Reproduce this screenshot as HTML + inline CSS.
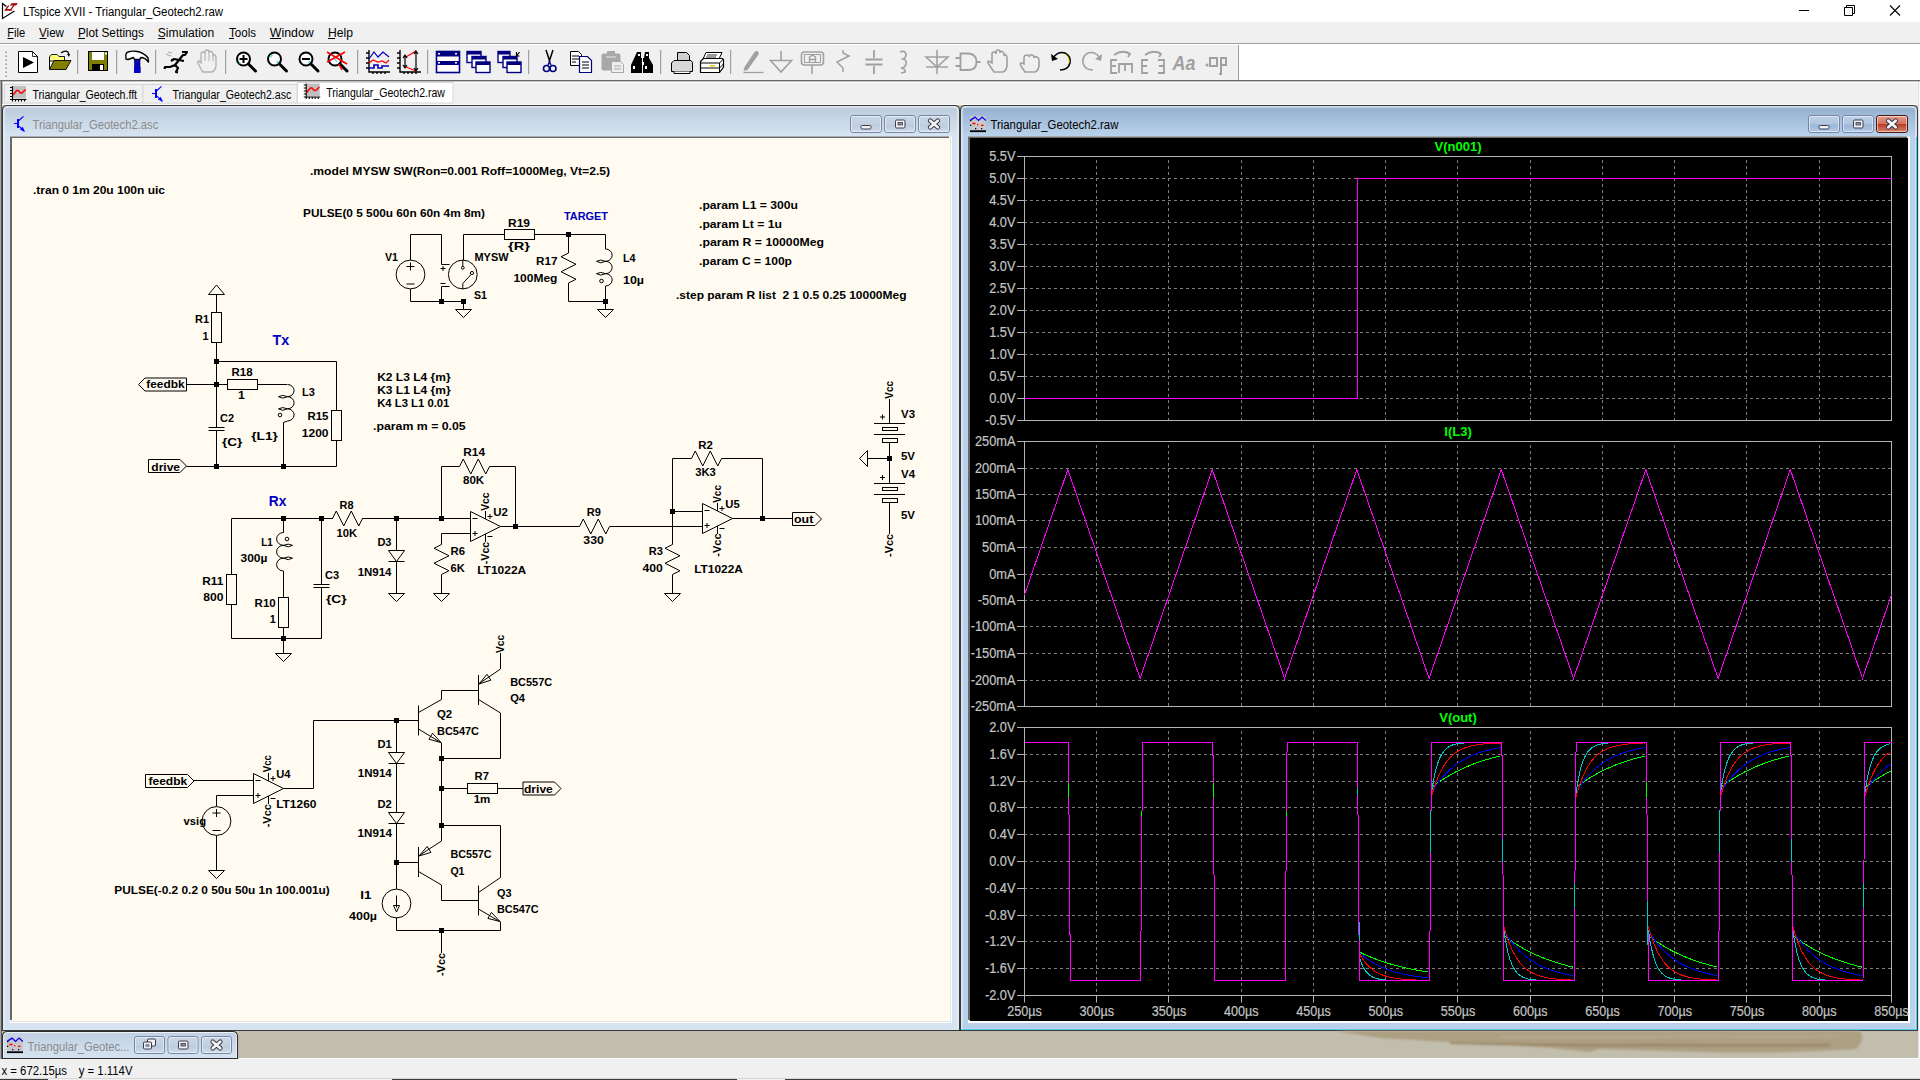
<!DOCTYPE html><html><head><meta charset="utf-8"><style>*{margin:0;padding:0}html,body{width:1920px;height:1080px;overflow:hidden;background:#c2beae}svg{display:block;font-family:"Liberation Sans",sans-serif}text{white-space:pre}</style></head><body><svg width="1920" height="1080" viewBox="0 0 1920 1080"><defs>
<linearGradient id="gTitleI" x1="0" y1="0" x2="0" y2="1"><stop offset="0" stop-color="#bccbdc"/><stop offset="1" stop-color="#d8e5f2"/></linearGradient>
<linearGradient id="gTitleA" x1="0" y1="0" x2="0" y2="1"><stop offset="0" stop-color="#95afd0"/><stop offset="1" stop-color="#bcd4ec"/></linearGradient>
<linearGradient id="gBtn" x1="0" y1="0" x2="0" y2="1"><stop offset="0" stop-color="#c9d6e5"/><stop offset="0.5" stop-color="#c3d1e2"/><stop offset="0.55" stop-color="#bccbdd"/><stop offset="1" stop-color="#cfdcea"/></linearGradient>
<linearGradient id="gBtnA" x1="0" y1="0" x2="0" y2="1"><stop offset="0" stop-color="#bed0e6"/><stop offset="0.5" stop-color="#b0c6e0"/><stop offset="0.55" stop-color="#9ab5d6"/><stop offset="1" stop-color="#b5cde8"/></linearGradient>
<linearGradient id="gRed" x1="0" y1="0" x2="0" y2="1"><stop offset="0" stop-color="#e8a090"/><stop offset="0.5" stop-color="#d0705a"/><stop offset="0.5" stop-color="#b83a20"/><stop offset="1" stop-color="#d88870"/></linearGradient>
<linearGradient id="gMin" x1="0" y1="0" x2="0" y2="1"><stop offset="0" stop-color="#c0d0e2"/><stop offset="1" stop-color="#d6e3f1"/></linearGradient>
<filter id="blur1" x="-5%" y="-50%" width="110%" height="200%"><feGaussianBlur stdDeviation="0.9"/></filter>
</defs><rect x="0" y="0" width="1920" height="22" fill="#fff"/><rect x="0" y="22" width="1920" height="21" fill="#f0f0f0"/><rect x="0" y="43" width="1920" height="1" fill="#a0a0a0"/><rect x="0" y="44" width="1920" height="37" fill="#f0f0f0"/><rect x="0" y="44" width="1920" height="1" fill="#fff"/><rect x="1239" y="45" width="681" height="36" fill="#fff"/><rect x="1238" y="45" width="1" height="36" fill="#a0a0a0"/><rect x="0" y="80" width="1920" height="1.5" fill="#6a6a6a"/><rect x="0" y="81.5" width="1920" height="23" fill="#f0f0f0"/><path d="M6.5,6.5 L2.5,3.5 L2.5,18.5 L14.5,11" fill="none" stroke="#000" stroke-width="1.2"/><path d="M4,10.8 L8,5.5 L9.5,5.5 L7,9 L10.5,9 L13,5.5 L9.8,5.5 L11.5,3.2 L17.8,3 L16.2,5.5 L14.5,5.5 L11.5,10 L12.5,10.8 Z" fill="#a01010"/><text x="23" y="16" font-size="12" fill="#000" textLength="200" lengthAdjust="spacingAndGlyphs">LTspice XVII - Triangular_Geotech2.raw</text><path d="M1799,10.5 H1809" stroke="#000" stroke-width="1"/><path d="M1844.5,7.5 h8 v8 h-8 z M1846.5,7.5 v-2 h8 v8 h-2" fill="none" stroke="#000" stroke-width="1"/><path d="M1890,5.5 L1900,15.5 M1900,5.5 L1890,15.5" stroke="#000" stroke-width="1.1"/><text x="7.25" y="37" font-size="12" fill="#000" textLength="18" lengthAdjust="spacingAndGlyphs">File</text><text x="39" y="37" font-size="12" fill="#000" textLength="25" lengthAdjust="spacingAndGlyphs">View</text><text x="78" y="37" font-size="12" fill="#000" textLength="66" lengthAdjust="spacingAndGlyphs">Plot Settings</text><text x="157.75" y="37" font-size="12" fill="#000" textLength="56.6" lengthAdjust="spacingAndGlyphs">Simulation</text><text x="229" y="37" font-size="12" fill="#000" textLength="27" lengthAdjust="spacingAndGlyphs">Tools</text><text x="269.8" y="37" font-size="12" fill="#000" textLength="44" lengthAdjust="spacingAndGlyphs">Window</text><text x="328" y="37" font-size="12" fill="#000" textLength="25" lengthAdjust="spacingAndGlyphs">Help</text><path d="M7.5,38.5 H13.5" stroke="#000" stroke-width="1"/><path d="M39.5,38.5 H46.5" stroke="#000" stroke-width="1"/><path d="M78,38.5 H85" stroke="#000" stroke-width="1"/><path d="M158,38.5 H165" stroke="#000" stroke-width="1"/><path d="M229,38.5 H234" stroke="#000" stroke-width="1"/><path d="M270,38.5 H281" stroke="#000" stroke-width="1"/><path d="M328,38.5 H335" stroke="#000" stroke-width="1"/><rect x="0" y="1058" width="1920" height="22" fill="#f0f0f0"/><rect x="0" y="1058" width="1920" height="1" fill="#fafafa"/><rect x="0" y="1078" width="1920" height="1" fill="#d8d8d8"/><rect x="0" y="1079" width="48" height="1" fill="#3c3c3c"/><rect x="392" y="1079" width="345" height="1" fill="#3c3c3c"/><rect x="785" y="1079" width="1135" height="1" fill="#3c3c3c"/><text x="1.5" y="1075" font-size="12" fill="#000" textLength="65.5" lengthAdjust="spacingAndGlyphs">x = 672.15µs</text><text x="78.75" y="1075" font-size="12" fill="#000" textLength="53.75" lengthAdjust="spacingAndGlyphs">y = 1.114V</text><rect x="1" y="81" width="1.5" height="24" fill="#7a7a7a"/><rect x="2.5" y="82" width="1918" height="1" fill="#fff"/><rect x="4.5" y="84.5" width="138.5" height="18.5" fill="#f0f0f0" stroke="#d8d8d8"/><rect x="143" y="84.5" width="154" height="18.5" fill="#f0f0f0" stroke="#d8d8d8"/><rect x="297.5" y="82.5" width="155.5" height="20.5" fill="#fff" stroke="#d8d8d8"/><text x="32.5" y="99.25" font-size="12" fill="#000" textLength="104.5" lengthAdjust="spacingAndGlyphs">Triangular_Geotech.fft</text><text x="172.5" y="99.25" font-size="12" fill="#000" textLength="118.75" lengthAdjust="spacingAndGlyphs">Triangular_Geotech2.asc</text><text x="326.25" y="96.75" font-size="12" fill="#000" textLength="118.75" lengthAdjust="spacingAndGlyphs">Triangular_Geotech2.raw</text><g transform="translate(0,0)"><rect x="13" y="86" width="13" height="12.5" fill="#c0c0c0"/><path d="M13,95 L16.6,90.5 L18.2,90.5 L20.5,93 L22,93 L25.6,89.5" fill="none" stroke="#ff0000" stroke-width="1.6"/><path d="M12.5,86 V100 M10,87.5 H12.5 M10,90.5 H12.5 M10,93.5 H12.5 M10,96.5 H12.5 M10,99.5 H26.5 M12.5,100 V101.5 M15.5,100 V101.5 M18.5,100 V101.5 M21.5,100 V101.5 M24.5,100 V101.5" fill="none" stroke="#000" stroke-width="1.1"/></g><g transform="translate(293.75,-2.5)"><rect x="13" y="86" width="13" height="12.5" fill="#c0c0c0"/><path d="M13,95 L16.6,90.5 L18.2,90.5 L20.5,93 L22,93 L25.6,89.5" fill="none" stroke="#ff0000" stroke-width="1.6"/><path d="M12.5,86 V100 M10,87.5 H12.5 M10,90.5 H12.5 M10,93.5 H12.5 M10,96.5 H12.5 M10,99.5 H26.5 M12.5,100 V101.5 M15.5,100 V101.5 M18.5,100 V101.5 M21.5,100 V101.5 M24.5,100 V101.5" fill="none" stroke="#000" stroke-width="1.1"/></g><g transform="translate(0,0)" fill="none" stroke="#0000ff"><rect x="155" y="89" width="2" height="9" fill="#0000ff" stroke="none"/><path d="M152,93.5 H155 M157,90.5 L161.5,86.3 M157,96.2 L162.5,101.5" stroke-width="1.1"/><path d="M158.3,99.3 L160.6,97.3 L162,100.8 Z" fill="#0000ff" stroke-width="0.8"/></g><rect x="0" y="104" width="1920" height="954" fill="#c2beae"/><rect x="0" y="104" width="1920" height="1" fill="#fafafa"/><rect x="5" y="51" width="2" height="2" fill="#c8c8c8"/><rect x="6" y="52" width="1" height="1" fill="#909090"/><rect x="5" y="55" width="2" height="2" fill="#c8c8c8"/><rect x="6" y="56" width="1" height="1" fill="#909090"/><rect x="5" y="59" width="2" height="2" fill="#c8c8c8"/><rect x="6" y="60" width="1" height="1" fill="#909090"/><rect x="5" y="63" width="2" height="2" fill="#c8c8c8"/><rect x="6" y="64" width="1" height="1" fill="#909090"/><rect x="5" y="67" width="2" height="2" fill="#c8c8c8"/><rect x="6" y="68" width="1" height="1" fill="#909090"/><rect x="5" y="71" width="2" height="2" fill="#c8c8c8"/><rect x="6" y="72" width="1" height="1" fill="#909090"/><rect x="5" y="75" width="2" height="2" fill="#c8c8c8"/><rect x="6" y="76" width="1" height="1" fill="#909090"/><rect x="77.0" y="50" width="1.2" height="24" fill="#a0a0a0"/><rect x="116.0" y="50" width="1.2" height="24" fill="#a0a0a0"/><rect x="155.0" y="50" width="1.2" height="24" fill="#a0a0a0"/><rect x="225.0" y="50" width="1.2" height="24" fill="#a0a0a0"/><rect x="357.0" y="50" width="1.2" height="24" fill="#a0a0a0"/><rect x="427.0" y="50" width="1.2" height="24" fill="#a0a0a0"/><rect x="528.0" y="50" width="1.2" height="24" fill="#a0a0a0"/><rect x="660.0" y="50" width="1.2" height="24" fill="#a0a0a0"/><rect x="730.0" y="50" width="1.2" height="24" fill="#a0a0a0"/><g transform="translate(18,50)"><path d="M0.5,1.5 H14.5 L19.5,6.5 V22.5 H0.5 Z" fill="#fff" stroke="#000"/><path d="M14.5,1.5 V6.5 H19.5" fill="none" stroke="#000" stroke-width="0.8"/><path d="M5,7 L16,12.5 L5,18 Z" fill="#000"/></g><g transform="translate(49,50)"><path d="M0.5,7 L2.5,4.5 H8 L10,6.5 H15.5 V11 H0.5 Z" fill="#ffff80" stroke="#000" stroke-width="0.9"/><path d="M0.5,19.5 L5,10.5 H22 L17,19.5 Z" fill="#808000" stroke="#000" stroke-width="0.9"/><path d="M0.5,7 V19.5" stroke="#000"/><path d="M12,3 Q16,0 19,2 L20,5" fill="none" stroke="#000" stroke-width="1.2"/><path d="M18,4 L21,4 L20,7" fill="#000"/></g><g transform="translate(88,50)"><rect x="0.5" y="1.5" width="19" height="19" fill="#808000" stroke="#000"/><rect x="4" y="2" width="12" height="8" fill="#fff"/><rect x="4" y="14" width="12" height="7" fill="#000"/><rect x="12" y="15" width="3" height="5" fill="#fff"/><rect x="17" y="2.5" width="2" height="2" fill="#fff"/></g><g transform="translate(125,50)"><path d="M0.8,5 Q1,2.5 3,2 Q6,1 10,1.2 Q18,1.5 23,8 L23.5,12 Q20,7.5 16,7.5 L14.5,9.5 L9.5,9.5 L8.5,7.5 Q6,8.5 3,9.5 L1,9 Z" fill="#fff" stroke="#000" stroke-width="1.4" stroke-linejoin="round"/><rect x="9.5" y="9.5" width="5.5" height="13" fill="#0000c8" stroke="#000" stroke-width="0.6"/><rect x="9" y="17" width="6.5" height="6" fill="#0000c8"/></g><g transform="translate(164,50)"><path d="M18,2 L23,2 L21,5 L19,5 L15,10 L20,11 M15,10 L11,15 L6,17 L1,17 L0.5,19 M11,15 L14,18 L12,22 L14,22.5 M15,10 L10,9 L7,11" fill="none" stroke="#000" stroke-width="2.2" stroke-linejoin="round"/><path d="M2,4 L7,6 M4,2 L8,3" stroke="#909090" stroke-width="0.8"/></g><g transform="translate(197,50)"><path d="M5,21 L1,13 Q0,11 2,11 L4,13 V4 Q4,2 6,2 Q8,2 8,4 V2 Q8,0 10,0 Q12,0 12,2 V3 Q12,1 14,1.5 Q16,2 16,4 V6 Q17,4 18,5 Q19,6 19,8 V16 Q18,21 15,22 H6 Z" fill="none" stroke="#b0b0b0" stroke-width="1.3"/><path d="M8,4 V11 M12,3 V11 M16,5 V11" stroke="#b0b0b0" stroke-width="1"/></g><g transform="translate(235.5,50)"><circle cx="8" cy="9" r="6.5" fill="#fff" stroke="#000" stroke-width="2"/><path d="M8,5 V13 M4,9 H12" stroke="#000" stroke-width="2"/><path d="M3.5,12 L5,13.5" stroke="#40e0f0" stroke-width="1.3"/><path d="M13,14 L20,21" stroke="#000" stroke-width="3" stroke-linecap="round"/></g><g transform="translate(266.5,50)"><circle cx="8" cy="9" r="6.5" fill="#fff" stroke="#000" stroke-width="2"/><path d="M4,7 L6,4.5 M10,13 L12,11" stroke="#40e0f0" stroke-width="1.3"/><path d="M13,14 L20,21" stroke="#000" stroke-width="3" stroke-linecap="round"/></g><g transform="translate(298,50)"><circle cx="8" cy="9" r="6.5" fill="#fff" stroke="#000" stroke-width="2"/><path d="M4,9 H12" stroke="#000" stroke-width="2"/><path d="M10,13 L12,11" stroke="#40e0f0" stroke-width="1.3"/><path d="M13,14 L20,21" stroke="#000" stroke-width="3" stroke-linecap="round"/></g><g transform="translate(327,50)"><circle cx="8" cy="9" r="6.5" fill="#fff" stroke="#000" stroke-width="2"/><path d="M6,6 L10,12" stroke="#40e0f0" stroke-width="1.3"/><path d="M13,14 L20,21" stroke="#000" stroke-width="3" stroke-linecap="round"/><path d="M0,2 L20,14 M18,2 L0,12 M12,14 L15,20" stroke="#ff0000" stroke-width="1.6"/></g><g transform="translate(366,50)"><path d="M3,0 V22 H24 M0,3 H3 M0,8 H3 M0,13 H3 M0,18 H3 M7,22 V24 M11,22 V24 M15,22 V24 M19,22 V24" fill="none" stroke="#000" stroke-width="1.4"/><path d="M3,9 L8,2 L12,7 L17,2 L23,7" fill="none" stroke="#0000c0" stroke-width="1.2"/><path d="M3,13 L7,10 L12,12 L16,11 L20,13 L23,10" fill="none" stroke="#f00" stroke-width="1.2"/><path d="M3,18 H8 V15 H12 V18 H16 V16 H23" fill="none" stroke="#0000c0" stroke-width="1.6"/></g><g transform="translate(397,50)"><path d="M3,0 V22 H24 M0,3 H3 M0,8 H3 M0,13 H3 M0,18 H3 M7,22 V24 M11,22 V24 M15,22 V24 M19,22 V24" fill="none" stroke="#000" stroke-width="1.4"/><path d="M9,7 L19,1 M9,17 L19,21" fill="none" stroke="#f00" stroke-width="1.2"/><path d="M8,5 V18 M19,1 V21 M6,8 L8,5 L10,8 M6,15 L8,18 L10,15 M17,4 L19,1 L21,4 M17,18 L19,21 L21,18" fill="none" stroke="#000" stroke-width="1.2"/></g><g transform="translate(436,50)"><rect x="0.5" y="1.5" width="23" height="21" fill="#fff" stroke="#000080" stroke-width="1.6"/><rect x="0.5" y="1.5" width="23" height="5" fill="#000080"/><rect x="0.5" y="11" width="23" height="4" fill="#000080"/><rect x="2" y="3" width="2" height="1.5" fill="#fff"/><rect x="19" y="3" width="2" height="1.5" fill="#fff"/><rect x="2" y="12" width="2" height="1.5" fill="#fff"/><rect x="19" y="12" width="2" height="1.5" fill="#fff"/></g><g transform="translate(466.5,50)"><rect x="0.5" y="1.5" width="14" height="11" fill="#fff" stroke="#000080" stroke-width="1.4"/><rect x="0.5" y="1.5" width="14" height="3" fill="#000080"/><rect x="5.5" y="6.5" width="14" height="11" fill="#fff" stroke="#000080" stroke-width="1.4"/><rect x="5.5" y="6.5" width="14" height="3" fill="#000080"/><rect x="9.5" y="12" width="14" height="10.5" fill="#fff" stroke="#000080" stroke-width="1.4"/><rect x="9.5" y="12" width="14" height="3" fill="#000080"/></g><g transform="translate(497.5,50)"><rect x="0.5" y="1.5" width="12" height="11" fill="#fff" stroke="#000080" stroke-width="1.4"/><rect x="0.5" y="1.5" width="12" height="3" fill="#000080"/><rect x="5.5" y="6.5" width="14" height="11" fill="#fff" stroke="#000080" stroke-width="1.4"/><rect x="5.5" y="6.5" width="14" height="3" fill="#000080"/><rect x="9.5" y="12" width="14" height="10.5" fill="#fff" stroke="#000080" stroke-width="1.4"/><rect x="9.5" y="12" width="14" height="3" fill="#000080"/><path d="M19,6 L22,2 M19,2 V6 H22" fill="none" stroke="#000" stroke-width="1.2"/></g><g transform="translate(543,50)"><path d="M3,0 L7,12 M10,0 L6,12" stroke="#000" stroke-width="1.5"/><circle cx="3.5" cy="18.5" r="3" fill="none" stroke="#000080" stroke-width="1.6"/><circle cx="10" cy="18.5" r="3" fill="none" stroke="#000080" stroke-width="1.6"/><path d="M5,15 L6.5,12 L8,15" fill="none" stroke="#000080" stroke-width="1.4"/></g><g transform="translate(570,50)"><path d="M0.5,1.5 H8.5 L11.5,4.5 V15.5 H0.5 Z" fill="#fff" stroke="#000"/><path d="M2,6 H9 M2,9 H9 M2,12 H6" stroke="#000"/><path d="M9.5,6.5 H17.5 L21.5,10.5 V22.5 H9.5 Z" fill="#fff" stroke="#000080" stroke-width="1.2"/><path d="M12,12 H19 M12,15 H19 M12,18 H19" stroke="#000"/></g><g transform="translate(601,50)"><rect x="0.5" y="3.5" width="19" height="17" rx="2" fill="#a8a8a8"/><rect x="6" y="1" width="8" height="4" fill="#a8a8a8"/><path d="M5,7 H15" stroke="#e8e8e8"/><path d="M10.5,11.5 H19.5 L22.5,14.5 V22.5 H10.5 Z" fill="#eee" stroke="#a8a8a8"/><path d="M13,16 H20 M13,19 H20" stroke="#a8a8a8"/></g><g transform="translate(631,50)"><path d="M6,2 H10 V8 L11,8 V23 H0 V15 Z M14,2 H18 V8 L22,15 V23 H12 V8 L13,8 Z" fill="#000"/><rect x="7" y="4" width="2" height="2" fill="#fff"/><rect x="15" y="4" width="2" height="2" fill="#fff"/><rect x="2" y="16" width="2" height="3" fill="#fff"/><rect x="14" y="16" width="2" height="3" fill="#fff"/><rect x="11" y="12" width="2" height="3" fill="#fff"/></g><g transform="translate(671,50)"><path d="M6.5,2.5 H15.5 L18.5,5.5 V11 H6.5 Z" fill="#d0d0d0" stroke="#000"/><path d="M0.5,13 L3,10.5 H20 L21.5,12.5 V21.5 H0.5 Z" fill="#d8d8d8" stroke="#000"/><path d="M3,21.5 V23.5 H19 V21.5" fill="#fff" stroke="#000"/></g><g transform="translate(700,50)"><path d="M6,2.5 H22 L19,9 H3 Z" fill="#fff" stroke="#000"/><path d="M7,5 H17 M6,7 H16" stroke="#000" stroke-width="0.8"/><path d="M0.5,11.5 L3.5,8.5 H22.5 L23.5,10 V17 L19.5,22.5 H0.5 Z" fill="#fff" stroke="#000" stroke-width="1.2"/><path d="M0.5,13 H19.5 V22.5 M19.5,13 L23.5,9 M0.5,18 H19.5 L23.5,14" fill="none" stroke="#000"/><rect x="10" y="15" width="5" height="1.5" fill="#e0d000"/></g><g transform="translate(741.5,50)"><path d="M3,17 L13,2 Q15,0 17,2 Q18,4 16,6 L6,20 L2,21 Z" fill="#a0a0a0"/><path d="M2,22.5 H22" stroke="#a0a0a0" stroke-width="1.3"/></g><g transform="translate(769.5,50)"><path d="M11.5,1 V10 M1,10.5 H22 L11.5,22 Z" fill="none" stroke="#a0a0a0" stroke-width="1.6"/></g><g transform="translate(800.5,50)"><rect x="1" y="2" width="22" height="13" rx="3" fill="none" stroke="#a0a0a0" stroke-width="1.6"/><rect x="4" y="4.5" width="16" height="8" fill="none" stroke="#a0a0a0" stroke-width="1"/><path d="M9,12 V7 L12,5 L15,7 V12 M9,9.5 H15" fill="none" stroke="#a0a0a0" stroke-width="1.4"/><path d="M11.5,15 V24" stroke="#a0a0a0" stroke-width="1.6"/></g><g transform="translate(835,50)"><path d="M8,0 V3 L14,6 L2,12 L8,18 V22" fill="none" stroke="#a0a0a0" stroke-width="1.5"/></g><g transform="translate(865.5,50)"><path d="M8.5,0 V8 M0,9.5 H17 M0,14.5 H17 M8.5,16 V24" fill="none" stroke="#a0a0a0" stroke-width="1.8"/></g><g transform="translate(900,50)"><path d="M0,2 Q5,0 6,4 Q6,8 3,9 Q7,10 6,14 Q5,18 1,18 Q6,19 5,22 L1,23" fill="none" stroke="#a0a0a0" stroke-width="1.6"/></g><g transform="translate(926,50)"><path d="M11,0 V24 M0,7 H22 L11,17 Z M0,17 H22" fill="none" stroke="#a0a0a0" stroke-width="1.6"/></g><g transform="translate(955.5,50)"><path d="M5,3.5 H13 Q21,4 21,12 Q21,20 13,20 H5 Z M0,8 H5 M0,16 H5 M21,12 H25" fill="none" stroke="#a0a0a0" stroke-width="1.8"/></g><g transform="translate(987,50)"><path d="M7,22 L1,13 Q0,11 2,11 L5,13 V4 Q5,2 7,2 Q9,2 9,4 V2 Q9,0 11,0 Q13,0 13,2 V3 Q13,1 15,1.5 Q17,2 17,4 V6 Q18,4 19,5 Q20,6 20,8 V16 Q19,21 16,22 Z" fill="none" stroke="#a0a0a0" stroke-width="1.6"/></g><g transform="translate(1019,50)"><path d="M6,22 L2,16 Q0,13 3,13 L5,14 V8 Q5,5 8,5 Q10,5 10,7 Q11,4 13,5 Q15,5 15,8 Q16,6 18,7 Q20,8 20,10 V16 Q19,21 16,22 Z" fill="none" stroke="#a0a0a0" stroke-width="1.6"/></g><g transform="translate(1050,50)"><path d="M3,8 Q8,1 15,3 Q21,6 20,13 Q18,20 10,20" fill="none" stroke="#000" stroke-width="1.6"/><path d="M15,4 Q20,7 19,13" fill="none" stroke="#e0d000" stroke-width="1"/><path d="M1,4 L2,11 L8,9 Z" fill="#000"/></g><g transform="translate(1081,50)"><path d="M19,8 Q14,1 7,3 Q1,6 2,13 Q4,20 12,20" fill="none" stroke="#a0a0a0" stroke-width="1.6"/><path d="M21,4 L20,11 L14,9 Z" fill="#a0a0a0"/></g><g transform="translate(1110,50)"><path d="M7,10 H1 V23 H7 M1,16 H6 M9,23 V14 H22 V23 M15,14 V21 M4,5 Q12,-1 20,4 M17,2 L20,4 L18,7" fill="none" stroke="#a0a0a0" stroke-width="1.8"/></g><g transform="translate(1141,50)"><path d="M7,10 H1 V23 H7 M1,16 H6 M17,10 H23 V23 H17 M23,16 H18 M4,5 Q12,-1 20,4 M17,2 L20,4 L18,7" fill="none" stroke="#a0a0a0" stroke-width="1.8"/></g><g transform="translate(1172.5,50)"><text x="0" y="20" font-size="20" font-style="italic" font-weight="bold" fill="#a0a0a0" textLength="23" lengthAdjust="spacingAndGlyphs">Aa</text></g><g transform="translate(1205,50)"><circle cx="2" cy="15" r="1.5" fill="#a0a0a0"/><rect x="5" y="8" width="7" height="8" fill="none" stroke="#a0a0a0" stroke-width="2"/><path d="M14,24 H16 V8 H21 V15 H16" fill="none" stroke="#a0a0a0" stroke-width="2"/></g><path d="M2.5,1030.5 V110.5 Q2.5,105.5 7.5,105.5 H954.5 Q959.5,105.5 959.5,110.5 V1030.5 Z" fill="#d6e3f1" stroke="#3a3a3a" stroke-width="1.1"/><path d="M3.5,138 V111 Q3.5,106.5 8.5,106.5 H953.5 Q958.5,106.5 958.5,111 V138 Z" fill="url(#gTitleI)"/><path d="M4,1030 V111.5 Q4,107 9,107 H953 Q958,107 958,111.5 V1030" fill="none" stroke="rgba(255,255,255,0.75)" stroke-width="1"/><rect x="10" y="136.5" width="942" height="886.5" fill="#fff"/><rect x="11" y="137.5" width="940" height="884.5" fill="#e4e4e4"/><rect x="10" y="136.5" width="939" height="883.5" fill="#696969"/><rect x="12" y="138" width="938" height="883" fill="#fffbf0"/><rect x="850.5" y="115.5" width="31" height="17" rx="2.5" fill="url(#gBtn)" stroke="#7688a8"/><rect x="851.5" y="116.5" width="29" height="15" rx="1.5" fill="none" stroke="rgba(255,255,255,0.5)"/><rect x="861.0" y="125.5" width="10" height="3.5" rx="1.2" fill="#f2f2f2" stroke="#3a3a48"/><rect x="884.5" y="115.5" width="31" height="17" rx="2.5" fill="url(#gBtn)" stroke="#7688a8"/><rect x="885.5" y="116.5" width="29" height="15" rx="1.5" fill="none" stroke="rgba(255,255,255,0.5)"/><rect x="895.5" y="120" width="9.5" height="8" rx="1.2" fill="#f2f2f2" stroke="#3a3a48"/><rect x="898.0" y="122.5" width="4.5" height="2.5" fill="#8898b0" stroke="#3a3a48" stroke-width="0.8"/><rect x="918.5" y="115.5" width="31" height="17" rx="2.5" fill="url(#gBtn)" stroke="#7688a8"/><rect x="919.5" y="116.5" width="29" height="15" rx="1.5" fill="none" stroke="rgba(255,255,255,0.5)"/><path d="M930.2,120.7 L937.8,127.3 M937.8,120.7 L930.2,127.3" stroke="#383848" stroke-width="4.6" stroke-linecap="round"/><path d="M930.2,120.7 L937.8,127.3 M937.8,120.7 L930.2,127.3" stroke="#f4f4f4" stroke-width="2.6" stroke-linecap="round"/><text x="32.5" y="129" font-size="12" fill="#8a8a8a" textLength="125.8" lengthAdjust="spacingAndGlyphs">Triangular_Geotech2.asc</text><g transform="translate(-138,30)" fill="none" stroke="#0000ff"><rect x="155" y="89" width="2" height="9" fill="#0000ff" stroke="none"/><path d="M152,93.5 H155 M157,90.5 L161.5,86.3 M157,96.2 L162.5,101.5" stroke-width="1.1"/><path d="M158.3,99.3 L160.6,97.3 L162,100.8 Z" fill="#0000ff" stroke-width="0.8"/></g><path d="M960.5,1030.5 V110.5 Q960.5,105.5 965.5,105.5 H1912.5 Q1917.5,105.5 1917.5,110.5 V1030.5 Z" fill="#d6e3f1" stroke="#3a3a3a" stroke-width="1.1"/><path d="M961.5,138 V111 Q961.5,106.5 966.5,106.5 H1911.5 Q1916.5,106.5 1916.5,111 V138 Z" fill="url(#gTitleA)"/><rect x="961.5" y="138" width="8.5" height="892" fill="#b9d1ea"/><rect x="1908" y="138" width="8.5" height="892" fill="#b9d1ea"/><rect x="961.5" y="1021" width="955" height="9" fill="#b9d1ea"/><path d="M962,1030 V111.5 Q962,107 967,107 H1911 Q1916,107 1916,111.5 V1030" fill="none" stroke="rgba(255,255,255,0.75)" stroke-width="1"/><rect x="968" y="136.5" width="942" height="886.5" fill="#fff"/><rect x="969" y="137.5" width="940" height="884.5" fill="#e4e4e4"/><rect x="968" y="136.5" width="939" height="883.5" fill="#696969"/><rect x="970" y="138" width="938" height="883" fill="#000"/><rect x="1916" y="137" width="1" height="893" fill="#3ad0f0"/><rect x="968" y="1021" width="941" height="1.5" fill="#fff"/><rect x="1908" y="137" width="1.5" height="885" fill="#fff"/><rect x="961" y="1029" width="956" height="1" fill="#3ad0f0" opacity="0.8"/><rect x="1808.5" y="115.5" width="31" height="17" rx="2.5" fill="url(#gBtnA)" stroke="#7688a8"/><rect x="1809.5" y="116.5" width="29" height="15" rx="1.5" fill="none" stroke="rgba(255,255,255,0.5)"/><rect x="1819.0" y="125.5" width="10" height="3.5" rx="1.2" fill="#f2f2f2" stroke="#3a3a48"/><rect x="1842.5" y="115.5" width="31" height="17" rx="2.5" fill="url(#gBtnA)" stroke="#7688a8"/><rect x="1843.5" y="116.5" width="29" height="15" rx="1.5" fill="none" stroke="rgba(255,255,255,0.5)"/><rect x="1853.5" y="120" width="9.5" height="8" rx="1.2" fill="#f2f2f2" stroke="#3a3a48"/><rect x="1856.0" y="122.5" width="4.5" height="2.5" fill="#8898b0" stroke="#3a3a48" stroke-width="0.8"/><rect x="1876.5" y="115.5" width="31" height="17" rx="2.5" fill="url(#gRed)" stroke="#4a1818"/><rect x="1877.5" y="116.5" width="29" height="15" rx="1.5" fill="none" stroke="rgba(255,255,255,0.5)"/><path d="M1888.2,120.7 L1895.8,127.3 M1895.8,120.7 L1888.2,127.3" stroke="#383848" stroke-width="4.6" stroke-linecap="round"/><path d="M1888.2,120.7 L1895.8,127.3 M1895.8,120.7 L1888.2,127.3" stroke="#f4f4f4" stroke-width="2.6" stroke-linecap="round"/><text x="990.4" y="128.75" font-size="12" fill="#000" textLength="128" lengthAdjust="spacingAndGlyphs">Triangular_Geotech2.raw</text><g transform="translate(0,0)"><rect x="970" y="116" width="16" height="14.5" fill="#c8c8c8"/><path d="M970.2,120.4 L975,117.1 L978.5,120.4 L982.1,117.1 L985.8,120.4" fill="none" stroke="#0000ff" stroke-width="1.3"/><rect x="970" y="120" width="1.3" height="1.3" fill="#000"/><rect x="970" y="124.7" width="1.3" height="1.3" fill="#000"/><path d="M972.3,123.5 H975.5 M981,125.3 H983.6" stroke="#ff0000" stroke-width="1.3"/><rect x="977" y="124" width="1.3" height="1.3" fill="#ff0000"/><rect x="975" y="128" width="1.3" height="1.3" fill="#000080"/><rect x="981" y="128" width="1.3" height="1.3" fill="#000080"/><rect x="970" y="130.3" width="16" height="1.8" fill="#000"/></g><path d="M2.5,1058.5 V1036.5 Q2.5,1031.5 7.5,1031.5 H232.5 Q237.5,1031.5 237.5,1036.5 V1058.5 Z" fill="url(#gMin)" stroke="#2e2e2e" stroke-width="1.2"/><path d="M3.5,1058 V1036.5 Q3.5,1032.5 7.5,1032.5 H232 Q236.5,1032.5 236.5,1036.5 V1058" fill="none" stroke="rgba(255,255,255,0.7)"/><rect x="134.5" y="1036.5" width="30" height="17" rx="2.5" fill="url(#gBtn)" stroke="#7688a8"/><rect x="135.5" y="1037.5" width="28" height="15" rx="1.5" fill="none" stroke="rgba(255,255,255,0.5)"/><rect x="147.5" y="1039" width="8" height="7" rx="1" fill="#f2f2f2" stroke="#3a3a48"/><rect x="143.5" y="1042" width="8" height="7" rx="1" fill="#f2f2f2" stroke="#3a3a48"/><rect x="145.5" y="1044" width="4" height="3" fill="#8090a8"/><rect x="168.0" y="1036.5" width="30" height="17" rx="2.5" fill="url(#gBtn)" stroke="#7688a8"/><rect x="169.0" y="1037.5" width="28" height="15" rx="1.5" fill="none" stroke="rgba(255,255,255,0.5)"/><rect x="178.5" y="1041" width="9.5" height="8" rx="1.2" fill="#f2f2f2" stroke="#3a3a48"/><rect x="181.0" y="1043.5" width="4.5" height="2.5" fill="#8898b0" stroke="#3a3a48" stroke-width="0.8"/><rect x="201.5" y="1036.5" width="30" height="17" rx="2.5" fill="url(#gBtn)" stroke="#7688a8"/><rect x="202.5" y="1037.5" width="28" height="15" rx="1.5" fill="none" stroke="rgba(255,255,255,0.5)"/><path d="M212.7,1041.7 L220.3,1048.3 M220.3,1041.7 L212.7,1048.3" stroke="#383848" stroke-width="4.6" stroke-linecap="round"/><path d="M212.7,1041.7 L220.3,1048.3 M220.3,1041.7 L212.7,1048.3" stroke="#f4f4f4" stroke-width="2.6" stroke-linecap="round"/><text x="27.5" y="1051" font-size="12" fill="#8a8a8a" textLength="102" lengthAdjust="spacingAndGlyphs">Triangular_Geotec...</text><g transform="translate(-963,921)"><rect x="970" y="116" width="16" height="14.5" fill="#c8c8c8"/><path d="M970.2,120.4 L975,117.1 L978.5,120.4 L982.1,117.1 L985.8,120.4" fill="none" stroke="#0000ff" stroke-width="1.3"/><rect x="970" y="120" width="1.3" height="1.3" fill="#000"/><rect x="970" y="124.7" width="1.3" height="1.3" fill="#000"/><path d="M972.3,123.5 H975.5 M981,125.3 H983.6" stroke="#ff0000" stroke-width="1.3"/><rect x="977" y="124" width="1.3" height="1.3" fill="#ff0000"/><rect x="975" y="128" width="1.3" height="1.3" fill="#000080"/><rect x="981" y="128" width="1.3" height="1.3" fill="#000080"/><rect x="970" y="130.3" width="16" height="1.8" fill="#000"/></g><g filter="url(#blur1)"><path d="M1335,1031 L1860,1031 Q1866,1040 1856,1049 L1840,1050 L1780,1052.5 L1720,1052.5 L1650,1050.5 L1600,1049 L1590,1052 L1550,1048 L1500,1044 L1440,1041.5 L1380,1038 Z" fill="#ad9f82"/><path d="M1450,1043 Q1560,1046 1650,1045 Q1760,1046 1830,1045" fill="none" stroke="#8d7855" stroke-width="2" opacity="0.75"/><path d="M1500,1037 Q1600,1038 1700,1036 Q1780,1037 1840,1036" fill="none" stroke="#b9ad92" stroke-width="3" opacity="0.6"/></g><rect x="0" y="81" width="1" height="978" fill="#a8a8a8"/><rect x="1" y="81" width="1" height="978" fill="#5a5a5a"/><rect x="1918" y="82" width="2" height="976" fill="#fcfcfc"/><rect x="1918" y="82" width="1" height="976" fill="#e0e0e0"/><path d="M1096.5,160.0 V420.5" stroke="#808080" stroke-width="1" stroke-dasharray="3,3"/><path d="M1168.5,160.0 V420.5" stroke="#808080" stroke-width="1" stroke-dasharray="3,3"/><path d="M1241.5,160.0 V420.5" stroke="#808080" stroke-width="1" stroke-dasharray="3,3"/><path d="M1313.5,160.0 V420.5" stroke="#808080" stroke-width="1" stroke-dasharray="3,3"/><path d="M1385.5,160.0 V420.5" stroke="#808080" stroke-width="1" stroke-dasharray="3,3"/><path d="M1457.5,160.0 V420.5" stroke="#808080" stroke-width="1" stroke-dasharray="3,3"/><path d="M1530.5,160.0 V420.5" stroke="#808080" stroke-width="1" stroke-dasharray="3,3"/><path d="M1602.5,160.0 V420.5" stroke="#808080" stroke-width="1" stroke-dasharray="3,3"/><path d="M1674.5,160.0 V420.5" stroke="#808080" stroke-width="1" stroke-dasharray="3,3"/><path d="M1746.5,160.0 V420.5" stroke="#808080" stroke-width="1" stroke-dasharray="3,3"/><path d="M1819.5,160.0 V420.5" stroke="#808080" stroke-width="1" stroke-dasharray="3,3"/><path d="M1024,178.5 H1891.5" stroke="#808080" stroke-width="1" stroke-dasharray="3,3"/><path d="M1024,200.5 H1891.5" stroke="#808080" stroke-width="1" stroke-dasharray="3,3"/><path d="M1024,222.5 H1891.5" stroke="#808080" stroke-width="1" stroke-dasharray="3,3"/><path d="M1024,244.5 H1891.5" stroke="#808080" stroke-width="1" stroke-dasharray="3,3"/><path d="M1024,266.5 H1891.5" stroke="#808080" stroke-width="1" stroke-dasharray="3,3"/><path d="M1024,288.5 H1891.5" stroke="#808080" stroke-width="1" stroke-dasharray="3,3"/><path d="M1024,310.5 H1891.5" stroke="#808080" stroke-width="1" stroke-dasharray="3,3"/><path d="M1024,332.5 H1891.5" stroke="#808080" stroke-width="1" stroke-dasharray="3,3"/><path d="M1024,354.5 H1891.5" stroke="#808080" stroke-width="1" stroke-dasharray="3,3"/><path d="M1024,376.5 H1891.5" stroke="#808080" stroke-width="1" stroke-dasharray="3,3"/><path d="M1024,398.5 H1891.5" stroke="#808080" stroke-width="1" stroke-dasharray="3,3"/><rect x="1024.5" y="156.5" width="867.0" height="264.0" fill="none" stroke="#b4b4b4" stroke-width="1"/><path d="M1017,156.5 H1024.5" stroke="#b4b4b4" stroke-width="1"/><text x="1015.5" y="161.3" font-size="14" fill="#c4c4c4" text-anchor="end" textLength="26.34" lengthAdjust="spacingAndGlyphs" stroke="#c4c4c4" stroke-width="0.2">5.5V</text><path d="M1017,178.5 H1024.5" stroke="#b4b4b4" stroke-width="1"/><text x="1015.5" y="183.3" font-size="14" fill="#c4c4c4" text-anchor="end" textLength="26.34" lengthAdjust="spacingAndGlyphs" stroke="#c4c4c4" stroke-width="0.2">5.0V</text><path d="M1017,200.5 H1024.5" stroke="#b4b4b4" stroke-width="1"/><text x="1015.5" y="205.3" font-size="14" fill="#c4c4c4" text-anchor="end" textLength="26.34" lengthAdjust="spacingAndGlyphs" stroke="#c4c4c4" stroke-width="0.2">4.5V</text><path d="M1017,222.5 H1024.5" stroke="#b4b4b4" stroke-width="1"/><text x="1015.5" y="227.3" font-size="14" fill="#c4c4c4" text-anchor="end" textLength="26.34" lengthAdjust="spacingAndGlyphs" stroke="#c4c4c4" stroke-width="0.2">4.0V</text><path d="M1017,244.5 H1024.5" stroke="#b4b4b4" stroke-width="1"/><text x="1015.5" y="249.3" font-size="14" fill="#c4c4c4" text-anchor="end" textLength="26.34" lengthAdjust="spacingAndGlyphs" stroke="#c4c4c4" stroke-width="0.2">3.5V</text><path d="M1017,266.5 H1024.5" stroke="#b4b4b4" stroke-width="1"/><text x="1015.5" y="271.3" font-size="14" fill="#c4c4c4" text-anchor="end" textLength="26.34" lengthAdjust="spacingAndGlyphs" stroke="#c4c4c4" stroke-width="0.2">3.0V</text><path d="M1017,288.5 H1024.5" stroke="#b4b4b4" stroke-width="1"/><text x="1015.5" y="293.3" font-size="14" fill="#c4c4c4" text-anchor="end" textLength="26.34" lengthAdjust="spacingAndGlyphs" stroke="#c4c4c4" stroke-width="0.2">2.5V</text><path d="M1017,310.5 H1024.5" stroke="#b4b4b4" stroke-width="1"/><text x="1015.5" y="315.3" font-size="14" fill="#c4c4c4" text-anchor="end" textLength="26.34" lengthAdjust="spacingAndGlyphs" stroke="#c4c4c4" stroke-width="0.2">2.0V</text><path d="M1017,332.5 H1024.5" stroke="#b4b4b4" stroke-width="1"/><text x="1015.5" y="337.3" font-size="14" fill="#c4c4c4" text-anchor="end" textLength="26.34" lengthAdjust="spacingAndGlyphs" stroke="#c4c4c4" stroke-width="0.2">1.5V</text><path d="M1017,354.5 H1024.5" stroke="#b4b4b4" stroke-width="1"/><text x="1015.5" y="359.3" font-size="14" fill="#c4c4c4" text-anchor="end" textLength="26.34" lengthAdjust="spacingAndGlyphs" stroke="#c4c4c4" stroke-width="0.2">1.0V</text><path d="M1017,376.5 H1024.5" stroke="#b4b4b4" stroke-width="1"/><text x="1015.5" y="381.3" font-size="14" fill="#c4c4c4" text-anchor="end" textLength="26.34" lengthAdjust="spacingAndGlyphs" stroke="#c4c4c4" stroke-width="0.2">0.5V</text><path d="M1017,398.5 H1024.5" stroke="#b4b4b4" stroke-width="1"/><text x="1015.5" y="403.3" font-size="14" fill="#c4c4c4" text-anchor="end" textLength="26.34" lengthAdjust="spacingAndGlyphs" stroke="#c4c4c4" stroke-width="0.2">0.0V</text><path d="M1017,420.5 H1024.5" stroke="#b4b4b4" stroke-width="1"/><text x="1015.5" y="425.3" font-size="14" fill="#c4c4c4" text-anchor="end" textLength="30.61" lengthAdjust="spacingAndGlyphs" stroke="#c4c4c4" stroke-width="0.2">-0.5V</text><text x="1458" y="151.0" font-size="13" font-weight="bold" fill="#00ff00" text-anchor="middle">V(n001)</text><path d="M1096.5,445.0 V706.5" stroke="#808080" stroke-width="1" stroke-dasharray="3,3"/><path d="M1168.5,445.0 V706.5" stroke="#808080" stroke-width="1" stroke-dasharray="3,3"/><path d="M1241.5,445.0 V706.5" stroke="#808080" stroke-width="1" stroke-dasharray="3,3"/><path d="M1313.5,445.0 V706.5" stroke="#808080" stroke-width="1" stroke-dasharray="3,3"/><path d="M1385.5,445.0 V706.5" stroke="#808080" stroke-width="1" stroke-dasharray="3,3"/><path d="M1457.5,445.0 V706.5" stroke="#808080" stroke-width="1" stroke-dasharray="3,3"/><path d="M1530.5,445.0 V706.5" stroke="#808080" stroke-width="1" stroke-dasharray="3,3"/><path d="M1602.5,445.0 V706.5" stroke="#808080" stroke-width="1" stroke-dasharray="3,3"/><path d="M1674.5,445.0 V706.5" stroke="#808080" stroke-width="1" stroke-dasharray="3,3"/><path d="M1746.5,445.0 V706.5" stroke="#808080" stroke-width="1" stroke-dasharray="3,3"/><path d="M1819.5,445.0 V706.5" stroke="#808080" stroke-width="1" stroke-dasharray="3,3"/><path d="M1024,468.5 H1891.5" stroke="#808080" stroke-width="1" stroke-dasharray="3,3"/><path d="M1024,494.5 H1891.5" stroke="#808080" stroke-width="1" stroke-dasharray="3,3"/><path d="M1024,520.5 H1891.5" stroke="#808080" stroke-width="1" stroke-dasharray="3,3"/><path d="M1024,547.5 H1891.5" stroke="#808080" stroke-width="1" stroke-dasharray="3,3"/><path d="M1024,574.5 H1891.5" stroke="#808080" stroke-width="1" stroke-dasharray="3,3"/><path d="M1024,600.5 H1891.5" stroke="#808080" stroke-width="1" stroke-dasharray="3,3"/><path d="M1024,626.5 H1891.5" stroke="#808080" stroke-width="1" stroke-dasharray="3,3"/><path d="M1024,653.5 H1891.5" stroke="#808080" stroke-width="1" stroke-dasharray="3,3"/><path d="M1024,680.5 H1891.5" stroke="#808080" stroke-width="1" stroke-dasharray="3,3"/><rect x="1024.5" y="441.5" width="867.0" height="265.0" fill="none" stroke="#b4b4b4" stroke-width="1"/><path d="M1017,441.5 H1024.5" stroke="#b4b4b4" stroke-width="1"/><text x="1015.5" y="446.3" font-size="14" fill="#c4c4c4" text-anchor="end" textLength="40.57" lengthAdjust="spacingAndGlyphs" stroke="#c4c4c4" stroke-width="0.2">250mA</text><path d="M1017,468.5 H1024.5" stroke="#b4b4b4" stroke-width="1"/><text x="1015.5" y="473.3" font-size="14" fill="#c4c4c4" text-anchor="end" textLength="40.57" lengthAdjust="spacingAndGlyphs" stroke="#c4c4c4" stroke-width="0.2">200mA</text><path d="M1017,494.5 H1024.5" stroke="#b4b4b4" stroke-width="1"/><text x="1015.5" y="499.3" font-size="14" fill="#c4c4c4" text-anchor="end" textLength="40.57" lengthAdjust="spacingAndGlyphs" stroke="#c4c4c4" stroke-width="0.2">150mA</text><path d="M1017,520.5 H1024.5" stroke="#b4b4b4" stroke-width="1"/><text x="1015.5" y="525.3" font-size="14" fill="#c4c4c4" text-anchor="end" textLength="40.57" lengthAdjust="spacingAndGlyphs" stroke="#c4c4c4" stroke-width="0.2">100mA</text><path d="M1017,547.5 H1024.5" stroke="#b4b4b4" stroke-width="1"/><text x="1015.5" y="552.3" font-size="14" fill="#c4c4c4" text-anchor="end" textLength="33.45" lengthAdjust="spacingAndGlyphs" stroke="#c4c4c4" stroke-width="0.2">50mA</text><path d="M1017,574.5 H1024.5" stroke="#b4b4b4" stroke-width="1"/><text x="1015.5" y="579.3" font-size="14" fill="#c4c4c4" text-anchor="end" textLength="26.33" lengthAdjust="spacingAndGlyphs" stroke="#c4c4c4" stroke-width="0.2">0mA</text><path d="M1017,600.5 H1024.5" stroke="#b4b4b4" stroke-width="1"/><text x="1015.5" y="605.3" font-size="14" fill="#c4c4c4" text-anchor="end" textLength="37.71" lengthAdjust="spacingAndGlyphs" stroke="#c4c4c4" stroke-width="0.2">-50mA</text><path d="M1017,626.5 H1024.5" stroke="#b4b4b4" stroke-width="1"/><text x="1015.5" y="631.3" font-size="14" fill="#c4c4c4" text-anchor="end" textLength="44.84" lengthAdjust="spacingAndGlyphs" stroke="#c4c4c4" stroke-width="0.2">-100mA</text><path d="M1017,653.5 H1024.5" stroke="#b4b4b4" stroke-width="1"/><text x="1015.5" y="658.3" font-size="14" fill="#c4c4c4" text-anchor="end" textLength="44.84" lengthAdjust="spacingAndGlyphs" stroke="#c4c4c4" stroke-width="0.2">-150mA</text><path d="M1017,680.5 H1024.5" stroke="#b4b4b4" stroke-width="1"/><text x="1015.5" y="685.3" font-size="14" fill="#c4c4c4" text-anchor="end" textLength="44.84" lengthAdjust="spacingAndGlyphs" stroke="#c4c4c4" stroke-width="0.2">-200mA</text><path d="M1017,706.5 H1024.5" stroke="#b4b4b4" stroke-width="1"/><text x="1015.5" y="711.3" font-size="14" fill="#c4c4c4" text-anchor="end" textLength="44.84" lengthAdjust="spacingAndGlyphs" stroke="#c4c4c4" stroke-width="0.2">-250mA</text><text x="1458" y="436.0" font-size="13" font-weight="bold" fill="#00ff00" text-anchor="middle">I(L3)</text><path d="M1096.5,731.0 V995.5" stroke="#808080" stroke-width="1" stroke-dasharray="3,3"/><path d="M1168.5,731.0 V995.5" stroke="#808080" stroke-width="1" stroke-dasharray="3,3"/><path d="M1241.5,731.0 V995.5" stroke="#808080" stroke-width="1" stroke-dasharray="3,3"/><path d="M1313.5,731.0 V995.5" stroke="#808080" stroke-width="1" stroke-dasharray="3,3"/><path d="M1385.5,731.0 V995.5" stroke="#808080" stroke-width="1" stroke-dasharray="3,3"/><path d="M1457.5,731.0 V995.5" stroke="#808080" stroke-width="1" stroke-dasharray="3,3"/><path d="M1530.5,731.0 V995.5" stroke="#808080" stroke-width="1" stroke-dasharray="3,3"/><path d="M1602.5,731.0 V995.5" stroke="#808080" stroke-width="1" stroke-dasharray="3,3"/><path d="M1674.5,731.0 V995.5" stroke="#808080" stroke-width="1" stroke-dasharray="3,3"/><path d="M1746.5,731.0 V995.5" stroke="#808080" stroke-width="1" stroke-dasharray="3,3"/><path d="M1819.5,731.0 V995.5" stroke="#808080" stroke-width="1" stroke-dasharray="3,3"/><path d="M1024,754.5 H1891.5" stroke="#808080" stroke-width="1" stroke-dasharray="3,3"/><path d="M1024,781.5 H1891.5" stroke="#808080" stroke-width="1" stroke-dasharray="3,3"/><path d="M1024,807.5 H1891.5" stroke="#808080" stroke-width="1" stroke-dasharray="3,3"/><path d="M1024,834.5 H1891.5" stroke="#808080" stroke-width="1" stroke-dasharray="3,3"/><path d="M1024,861.5 H1891.5" stroke="#808080" stroke-width="1" stroke-dasharray="3,3"/><path d="M1024,888.5 H1891.5" stroke="#808080" stroke-width="1" stroke-dasharray="3,3"/><path d="M1024,915.5 H1891.5" stroke="#808080" stroke-width="1" stroke-dasharray="3,3"/><path d="M1024,941.5 H1891.5" stroke="#808080" stroke-width="1" stroke-dasharray="3,3"/><path d="M1024,968.5 H1891.5" stroke="#808080" stroke-width="1" stroke-dasharray="3,3"/><rect x="1024.5" y="727.5" width="867.0" height="268.0" fill="none" stroke="#b4b4b4" stroke-width="1"/><path d="M1017,727.5 H1024.5" stroke="#b4b4b4" stroke-width="1"/><text x="1015.5" y="732.3" font-size="14" fill="#c4c4c4" text-anchor="end" textLength="26.34" lengthAdjust="spacingAndGlyphs" stroke="#c4c4c4" stroke-width="0.2">2.0V</text><path d="M1017,754.5 H1024.5" stroke="#b4b4b4" stroke-width="1"/><text x="1015.5" y="759.3" font-size="14" fill="#c4c4c4" text-anchor="end" textLength="26.34" lengthAdjust="spacingAndGlyphs" stroke="#c4c4c4" stroke-width="0.2">1.6V</text><path d="M1017,781.5 H1024.5" stroke="#b4b4b4" stroke-width="1"/><text x="1015.5" y="786.3" font-size="14" fill="#c4c4c4" text-anchor="end" textLength="26.34" lengthAdjust="spacingAndGlyphs" stroke="#c4c4c4" stroke-width="0.2">1.2V</text><path d="M1017,807.5 H1024.5" stroke="#b4b4b4" stroke-width="1"/><text x="1015.5" y="812.3" font-size="14" fill="#c4c4c4" text-anchor="end" textLength="26.34" lengthAdjust="spacingAndGlyphs" stroke="#c4c4c4" stroke-width="0.2">0.8V</text><path d="M1017,834.5 H1024.5" stroke="#b4b4b4" stroke-width="1"/><text x="1015.5" y="839.3" font-size="14" fill="#c4c4c4" text-anchor="end" textLength="26.34" lengthAdjust="spacingAndGlyphs" stroke="#c4c4c4" stroke-width="0.2">0.4V</text><path d="M1017,861.5 H1024.5" stroke="#b4b4b4" stroke-width="1"/><text x="1015.5" y="866.3" font-size="14" fill="#c4c4c4" text-anchor="end" textLength="26.34" lengthAdjust="spacingAndGlyphs" stroke="#c4c4c4" stroke-width="0.2">0.0V</text><path d="M1017,888.5 H1024.5" stroke="#b4b4b4" stroke-width="1"/><text x="1015.5" y="893.3" font-size="14" fill="#c4c4c4" text-anchor="end" textLength="30.61" lengthAdjust="spacingAndGlyphs" stroke="#c4c4c4" stroke-width="0.2">-0.4V</text><path d="M1017,915.5 H1024.5" stroke="#b4b4b4" stroke-width="1"/><text x="1015.5" y="920.3" font-size="14" fill="#c4c4c4" text-anchor="end" textLength="30.61" lengthAdjust="spacingAndGlyphs" stroke="#c4c4c4" stroke-width="0.2">-0.8V</text><path d="M1017,941.5 H1024.5" stroke="#b4b4b4" stroke-width="1"/><text x="1015.5" y="946.3" font-size="14" fill="#c4c4c4" text-anchor="end" textLength="30.61" lengthAdjust="spacingAndGlyphs" stroke="#c4c4c4" stroke-width="0.2">-1.2V</text><path d="M1017,968.5 H1024.5" stroke="#b4b4b4" stroke-width="1"/><text x="1015.5" y="973.3" font-size="14" fill="#c4c4c4" text-anchor="end" textLength="30.61" lengthAdjust="spacingAndGlyphs" stroke="#c4c4c4" stroke-width="0.2">-1.6V</text><path d="M1017,995.5 H1024.5" stroke="#b4b4b4" stroke-width="1"/><text x="1015.5" y="1000.3" font-size="14" fill="#c4c4c4" text-anchor="end" textLength="30.61" lengthAdjust="spacingAndGlyphs" stroke="#c4c4c4" stroke-width="0.2">-2.0V</text><text x="1458" y="722.0" font-size="13" font-weight="bold" fill="#00ff00" text-anchor="middle">V(out)</text><path d="M1024.5,995.5 V1002.5" stroke="#b4b4b4" stroke-width="1"/><text x="1024.5" y="1015.6" font-size="14" fill="#c4c4c4" text-anchor="middle" textLength="34.6" lengthAdjust="spacingAndGlyphs" stroke="#c4c4c4" stroke-width="0.2">250µs</text><path d="M1096.5,995.5 V1002.5" stroke="#b4b4b4" stroke-width="1"/><text x="1096.745" y="1015.6" font-size="14" fill="#c4c4c4" text-anchor="middle" textLength="34.6" lengthAdjust="spacingAndGlyphs" stroke="#c4c4c4" stroke-width="0.2">300µs</text><path d="M1168.5,995.5 V1002.5" stroke="#b4b4b4" stroke-width="1"/><text x="1168.99" y="1015.6" font-size="14" fill="#c4c4c4" text-anchor="middle" textLength="34.6" lengthAdjust="spacingAndGlyphs" stroke="#c4c4c4" stroke-width="0.2">350µs</text><path d="M1241.5,995.5 V1002.5" stroke="#b4b4b4" stroke-width="1"/><text x="1241.2350000000001" y="1015.6" font-size="14" fill="#c4c4c4" text-anchor="middle" textLength="34.6" lengthAdjust="spacingAndGlyphs" stroke="#c4c4c4" stroke-width="0.2">400µs</text><path d="M1313.5,995.5 V1002.5" stroke="#b4b4b4" stroke-width="1"/><text x="1313.48" y="1015.6" font-size="14" fill="#c4c4c4" text-anchor="middle" textLength="34.6" lengthAdjust="spacingAndGlyphs" stroke="#c4c4c4" stroke-width="0.2">450µs</text><path d="M1385.5,995.5 V1002.5" stroke="#b4b4b4" stroke-width="1"/><text x="1385.725" y="1015.6" font-size="14" fill="#c4c4c4" text-anchor="middle" textLength="34.6" lengthAdjust="spacingAndGlyphs" stroke="#c4c4c4" stroke-width="0.2">500µs</text><path d="M1457.5,995.5 V1002.5" stroke="#b4b4b4" stroke-width="1"/><text x="1457.97" y="1015.6" font-size="14" fill="#c4c4c4" text-anchor="middle" textLength="34.6" lengthAdjust="spacingAndGlyphs" stroke="#c4c4c4" stroke-width="0.2">550µs</text><path d="M1530.5,995.5 V1002.5" stroke="#b4b4b4" stroke-width="1"/><text x="1530.2150000000001" y="1015.6" font-size="14" fill="#c4c4c4" text-anchor="middle" textLength="34.6" lengthAdjust="spacingAndGlyphs" stroke="#c4c4c4" stroke-width="0.2">600µs</text><path d="M1602.5,995.5 V1002.5" stroke="#b4b4b4" stroke-width="1"/><text x="1602.46" y="1015.6" font-size="14" fill="#c4c4c4" text-anchor="middle" textLength="34.6" lengthAdjust="spacingAndGlyphs" stroke="#c4c4c4" stroke-width="0.2">650µs</text><path d="M1674.5,995.5 V1002.5" stroke="#b4b4b4" stroke-width="1"/><text x="1674.705" y="1015.6" font-size="14" fill="#c4c4c4" text-anchor="middle" textLength="34.6" lengthAdjust="spacingAndGlyphs" stroke="#c4c4c4" stroke-width="0.2">700µs</text><path d="M1746.5,995.5 V1002.5" stroke="#b4b4b4" stroke-width="1"/><text x="1746.95" y="1015.6" font-size="14" fill="#c4c4c4" text-anchor="middle" textLength="34.6" lengthAdjust="spacingAndGlyphs" stroke="#c4c4c4" stroke-width="0.2">750µs</text><path d="M1819.5,995.5 V1002.5" stroke="#b4b4b4" stroke-width="1"/><text x="1819.1950000000002" y="1015.6" font-size="14" fill="#c4c4c4" text-anchor="middle" textLength="34.6" lengthAdjust="spacingAndGlyphs" stroke="#c4c4c4" stroke-width="0.2">800µs</text><path d="M1891.5,995.5 V1002.5" stroke="#b4b4b4" stroke-width="1"/><text x="1891.44" y="1015.6" font-size="14" fill="#c4c4c4" text-anchor="middle" textLength="34.6" lengthAdjust="spacingAndGlyphs" stroke="#c4c4c4" stroke-width="0.2">850µs</text><path d="M1024.5,398.5 H1357.5 V178.5 H1891.5" fill="none" stroke="#ff00ff" stroke-width="1" shape-rendering="crispEdges"/><path d="M1024.5,594.9 L1067.8,469.6 L1140.1,678.4 L1212.3,469.6 L1284.6,678.4 L1356.8,469.6 L1429.1,678.4 L1501.3,469.6 L1573.6,678.4 L1645.8,469.6 L1718.1,678.4 L1790.3,469.6 L1862.5,678.4 L1891.5,594.9" fill="none" stroke="#ff00ff" stroke-width="1" shape-rendering="crispEdges"/><path d=" M1359.4,952.0 L1360.9,952.7 L1362.4,953.5 L1363.9,954.2 L1365.4,954.8 L1366.9,955.5 L1368.4,956.2 L1369.9,956.8 L1371.4,957.4 L1372.9,958.0 L1374.4,958.6 L1375.9,959.2 L1377.4,959.7 L1378.9,960.3 L1380.4,960.8 L1381.9,961.3 L1383.4,961.8 L1384.9,962.3 L1386.4,962.8 L1387.9,963.2 L1389.4,963.7 L1390.9,964.1 L1392.4,964.5 L1393.9,964.9 L1395.4,965.3 L1396.9,965.7 L1398.4,966.1 L1399.9,966.5 L1401.4,966.9 L1402.9,967.2 L1404.4,967.6 L1405.9,967.9 L1407.4,968.2 L1408.9,968.5 L1410.4,968.9 L1411.9,969.2 L1413.4,969.4 L1414.9,969.7 L1416.4,970.0 L1417.9,970.3 L1419.4,970.6 L1420.9,970.8 L1422.4,971.1 L1423.9,971.3 L1425.4,971.5 L1426.9,971.8 L1428.4,972.0 M1431.6,787.5 L1433.1,786.3 L1434.6,785.2 L1436.1,784.1 L1437.6,783.0 L1439.1,782.0 L1440.6,780.9 L1442.1,779.9 L1443.6,779.0 L1445.1,778.0 L1446.6,777.1 L1448.1,776.2 L1449.6,775.3 L1451.1,774.5 L1452.6,773.6 L1454.1,772.8 L1455.6,772.0 L1457.1,771.3 L1458.6,770.5 L1460.1,769.8 L1461.6,769.1 L1463.1,768.4 L1464.6,767.7 L1466.1,767.1 L1467.6,766.4 L1469.1,765.8 L1470.6,765.2 L1472.1,764.6 L1473.6,764.0 L1475.1,763.5 L1476.6,762.9 L1478.1,762.4 L1479.6,761.9 L1481.1,761.4 L1482.6,760.9 L1484.1,760.4 L1485.6,759.9 L1487.1,759.5 L1488.6,759.1 L1490.1,758.6 L1491.6,758.2 L1493.1,757.8 L1494.6,757.4 L1496.1,757.0 L1497.6,756.6 L1499.1,756.3 L1500.6,755.9 M1503.9,935.5 L1505.4,936.7 L1506.9,937.8 L1508.4,938.9 L1509.9,940.0 L1511.4,941.0 L1512.9,942.1 L1514.4,943.1 L1515.9,944.0 L1517.4,945.0 L1518.9,945.9 L1520.4,946.8 L1521.9,947.7 L1523.4,948.5 L1524.9,949.4 L1526.4,950.2 L1527.9,951.0 L1529.4,951.7 L1530.9,952.5 L1532.4,953.2 L1533.9,953.9 L1535.4,954.6 L1536.9,955.3 L1538.4,955.9 L1539.9,956.6 L1541.4,957.2 L1542.9,957.8 L1544.4,958.4 L1545.9,959.0 L1547.4,959.5 L1548.9,960.1 L1550.4,960.6 L1551.9,961.1 L1553.4,961.6 L1554.9,962.1 L1556.4,962.6 L1557.9,963.1 L1559.4,963.5 L1560.9,963.9 L1562.4,964.4 L1563.9,964.8 L1565.4,965.2 L1566.9,965.6 L1568.4,966.0 L1569.9,966.4 L1571.4,966.7 L1572.9,967.1 M1576.1,787.5 L1577.6,786.3 L1579.1,785.2 L1580.6,784.1 L1582.1,783.0 L1583.6,782.0 L1585.1,780.9 L1586.6,779.9 L1588.1,779.0 L1589.6,778.0 L1591.1,777.1 L1592.6,776.2 L1594.1,775.3 L1595.6,774.5 L1597.1,773.6 L1598.6,772.8 L1600.1,772.0 L1601.6,771.3 L1603.1,770.5 L1604.6,769.8 L1606.1,769.1 L1607.6,768.4 L1609.1,767.7 L1610.6,767.1 L1612.1,766.4 L1613.6,765.8 L1615.1,765.2 L1616.6,764.6 L1618.1,764.0 L1619.6,763.5 L1621.1,762.9 L1622.6,762.4 L1624.1,761.9 L1625.6,761.4 L1627.1,760.9 L1628.6,760.4 L1630.1,759.9 L1631.6,759.5 L1633.1,759.1 L1634.6,758.6 L1636.1,758.2 L1637.6,757.8 L1639.1,757.4 L1640.6,757.0 L1642.1,756.6 L1643.6,756.3 L1645.1,755.9 M1648.4,935.5 L1649.9,936.7 L1651.4,937.8 L1652.9,938.9 L1654.4,940.0 L1655.9,941.0 L1657.4,942.1 L1658.9,943.1 L1660.4,944.0 L1661.9,945.0 L1663.4,945.9 L1664.9,946.8 L1666.4,947.7 L1667.9,948.5 L1669.4,949.4 L1670.9,950.2 L1672.4,951.0 L1673.9,951.7 L1675.4,952.5 L1676.9,953.2 L1678.4,953.9 L1679.9,954.6 L1681.4,955.3 L1682.9,955.9 L1684.4,956.6 L1685.9,957.2 L1687.4,957.8 L1688.9,958.4 L1690.4,959.0 L1691.9,959.5 L1693.4,960.1 L1694.9,960.6 L1696.4,961.1 L1697.9,961.6 L1699.4,962.1 L1700.9,962.6 L1702.4,963.1 L1703.9,963.5 L1705.4,963.9 L1706.9,964.4 L1708.4,964.8 L1709.9,965.2 L1711.4,965.6 L1712.9,966.0 L1714.4,966.4 L1715.9,966.7 L1717.4,967.1 M1720.6,787.5 L1722.1,786.3 L1723.6,785.2 L1725.1,784.1 L1726.6,783.0 L1728.1,782.0 L1729.6,780.9 L1731.1,779.9 L1732.6,779.0 L1734.1,778.0 L1735.6,777.1 L1737.1,776.2 L1738.6,775.3 L1740.1,774.5 L1741.6,773.6 L1743.1,772.8 L1744.6,772.0 L1746.1,771.3 L1747.6,770.5 L1749.1,769.8 L1750.6,769.1 L1752.1,768.4 L1753.6,767.7 L1755.1,767.1 L1756.6,766.4 L1758.1,765.8 L1759.6,765.2 L1761.1,764.6 L1762.6,764.0 L1764.1,763.5 L1765.6,762.9 L1767.1,762.4 L1768.6,761.9 L1770.1,761.4 L1771.6,760.9 L1773.1,760.4 L1774.6,759.9 L1776.1,759.5 L1777.6,759.1 L1779.1,758.6 L1780.6,758.2 L1782.1,757.8 L1783.6,757.4 L1785.1,757.0 L1786.6,756.6 L1788.1,756.3 L1789.6,755.9 M1792.9,935.5 L1794.4,936.7 L1795.9,937.8 L1797.4,938.9 L1798.9,940.0 L1800.4,941.0 L1801.9,942.1 L1803.4,943.1 L1804.9,944.0 L1806.4,945.0 L1807.9,945.9 L1809.4,946.8 L1810.9,947.7 L1812.4,948.5 L1813.9,949.4 L1815.4,950.2 L1816.9,951.0 L1818.4,951.7 L1819.9,952.5 L1821.4,953.2 L1822.9,953.9 L1824.4,954.6 L1825.9,955.3 L1827.4,955.9 L1828.9,956.6 L1830.4,957.2 L1831.9,957.8 L1833.4,958.4 L1834.9,959.0 L1836.4,959.5 L1837.9,960.1 L1839.4,960.6 L1840.9,961.1 L1842.4,961.6 L1843.9,962.1 L1845.4,962.6 L1846.9,963.1 L1848.4,963.5 L1849.9,963.9 L1851.4,964.4 L1852.9,964.8 L1854.4,965.2 L1855.9,965.6 L1857.4,966.0 L1858.9,966.4 L1860.4,966.7 L1861.9,967.1 M1865.0,787.5 L1866.5,786.3 L1868.0,785.2 L1869.5,784.1 L1871.0,783.0 L1872.5,782.0 L1874.0,780.9 L1875.5,779.9 L1877.0,779.0 L1878.5,778.0 L1880.0,777.1 L1881.5,776.2 L1883.0,775.3 L1884.5,774.5 L1886.0,773.6 L1887.5,772.8 L1889.0,772.0 L1890.5,771.3" fill="none" stroke="#00ff00" stroke-width="1" shape-rendering="crispEdges"/><path d=" M1359.4,952.5 L1360.9,953.9 L1362.4,955.2 L1363.9,956.4 L1365.4,957.6 L1366.9,958.7 L1368.4,959.8 L1369.9,960.8 L1371.4,961.7 L1372.9,962.6 L1374.4,963.5 L1375.9,964.3 L1377.4,965.1 L1378.9,965.9 L1380.4,966.6 L1381.9,967.3 L1383.4,967.9 L1384.9,968.5 L1386.4,969.1 L1387.9,969.7 L1389.4,970.2 L1390.9,970.7 L1392.4,971.2 L1393.9,971.6 L1395.4,972.1 L1396.9,972.5 L1398.4,972.9 L1399.9,973.2 L1401.4,973.6 L1402.9,973.9 L1404.4,974.3 L1405.9,974.6 L1407.4,974.8 L1408.9,975.1 L1410.4,975.4 L1411.9,975.6 L1413.4,975.9 L1414.9,976.1 L1416.4,976.3 L1417.9,976.5 L1419.4,976.7 L1420.9,976.9 L1422.4,977.1 L1423.9,977.2 L1425.4,977.4 L1426.9,977.5 L1428.4,977.7 M1431.6,792.5 L1433.1,790.1 L1434.6,787.7 L1436.1,785.5 L1437.6,783.4 L1439.1,781.4 L1440.6,779.5 L1442.1,777.7 L1443.6,776.0 L1445.1,774.4 L1446.6,772.8 L1448.1,771.3 L1449.6,769.9 L1451.1,768.6 L1452.6,767.3 L1454.1,766.1 L1455.6,765.0 L1457.1,763.9 L1458.6,762.8 L1460.1,761.8 L1461.6,760.9 L1463.1,760.0 L1464.6,759.1 L1466.1,758.3 L1467.6,757.6 L1469.1,756.8 L1470.6,756.1 L1472.1,755.5 L1473.6,754.8 L1475.1,754.2 L1476.6,753.7 L1478.1,753.1 L1479.6,752.6 L1481.1,752.1 L1482.6,751.6 L1484.1,751.2 L1485.6,750.8 L1487.1,750.4 L1488.6,750.0 L1490.1,749.6 L1491.6,749.3 L1493.1,748.9 L1494.6,748.6 L1496.1,748.3 L1497.6,748.0 L1499.1,747.8 L1500.6,747.5 M1503.9,930.5 L1505.4,932.9 L1506.9,935.3 L1508.4,937.5 L1509.9,939.6 L1511.4,941.6 L1512.9,943.5 L1514.4,945.3 L1515.9,947.0 L1517.4,948.6 L1518.9,950.2 L1520.4,951.7 L1521.9,953.1 L1523.4,954.4 L1524.9,955.7 L1526.4,956.9 L1527.9,958.0 L1529.4,959.1 L1530.9,960.2 L1532.4,961.2 L1533.9,962.1 L1535.4,963.0 L1536.9,963.9 L1538.4,964.7 L1539.9,965.4 L1541.4,966.2 L1542.9,966.9 L1544.4,967.5 L1545.9,968.2 L1547.4,968.8 L1548.9,969.3 L1550.4,969.9 L1551.9,970.4 L1553.4,970.9 L1554.9,971.4 L1556.4,971.8 L1557.9,972.2 L1559.4,972.6 L1560.9,973.0 L1562.4,973.4 L1563.9,973.7 L1565.4,974.1 L1566.9,974.4 L1568.4,974.7 L1569.9,975.0 L1571.4,975.2 L1572.9,975.5 M1576.1,792.5 L1577.6,790.1 L1579.1,787.7 L1580.6,785.5 L1582.1,783.4 L1583.6,781.4 L1585.1,779.5 L1586.6,777.7 L1588.1,776.0 L1589.6,774.4 L1591.1,772.8 L1592.6,771.3 L1594.1,769.9 L1595.6,768.6 L1597.1,767.3 L1598.6,766.1 L1600.1,765.0 L1601.6,763.9 L1603.1,762.8 L1604.6,761.8 L1606.1,760.9 L1607.6,760.0 L1609.1,759.1 L1610.6,758.3 L1612.1,757.6 L1613.6,756.8 L1615.1,756.1 L1616.6,755.5 L1618.1,754.8 L1619.6,754.2 L1621.1,753.7 L1622.6,753.1 L1624.1,752.6 L1625.6,752.1 L1627.1,751.6 L1628.6,751.2 L1630.1,750.8 L1631.6,750.4 L1633.1,750.0 L1634.6,749.6 L1636.1,749.3 L1637.6,748.9 L1639.1,748.6 L1640.6,748.3 L1642.1,748.0 L1643.6,747.8 L1645.1,747.5 M1648.4,930.5 L1649.9,932.9 L1651.4,935.3 L1652.9,937.5 L1654.4,939.6 L1655.9,941.6 L1657.4,943.5 L1658.9,945.3 L1660.4,947.0 L1661.9,948.6 L1663.4,950.2 L1664.9,951.7 L1666.4,953.1 L1667.9,954.4 L1669.4,955.7 L1670.9,956.9 L1672.4,958.0 L1673.9,959.1 L1675.4,960.2 L1676.9,961.2 L1678.4,962.1 L1679.9,963.0 L1681.4,963.9 L1682.9,964.7 L1684.4,965.4 L1685.9,966.2 L1687.4,966.9 L1688.9,967.5 L1690.4,968.2 L1691.9,968.8 L1693.4,969.3 L1694.9,969.9 L1696.4,970.4 L1697.9,970.9 L1699.4,971.4 L1700.9,971.8 L1702.4,972.2 L1703.9,972.6 L1705.4,973.0 L1706.9,973.4 L1708.4,973.7 L1709.9,974.1 L1711.4,974.4 L1712.9,974.7 L1714.4,975.0 L1715.9,975.2 L1717.4,975.5 M1720.6,792.5 L1722.1,790.1 L1723.6,787.7 L1725.1,785.5 L1726.6,783.4 L1728.1,781.4 L1729.6,779.5 L1731.1,777.7 L1732.6,776.0 L1734.1,774.4 L1735.6,772.8 L1737.1,771.3 L1738.6,769.9 L1740.1,768.6 L1741.6,767.3 L1743.1,766.1 L1744.6,765.0 L1746.1,763.9 L1747.6,762.8 L1749.1,761.8 L1750.6,760.9 L1752.1,760.0 L1753.6,759.1 L1755.1,758.3 L1756.6,757.6 L1758.1,756.8 L1759.6,756.1 L1761.1,755.5 L1762.6,754.8 L1764.1,754.2 L1765.6,753.7 L1767.1,753.1 L1768.6,752.6 L1770.1,752.1 L1771.6,751.6 L1773.1,751.2 L1774.6,750.8 L1776.1,750.4 L1777.6,750.0 L1779.1,749.6 L1780.6,749.3 L1782.1,748.9 L1783.6,748.6 L1785.1,748.3 L1786.6,748.0 L1788.1,747.8 L1789.6,747.5 M1792.9,930.5 L1794.4,932.9 L1795.9,935.3 L1797.4,937.5 L1798.9,939.6 L1800.4,941.6 L1801.9,943.5 L1803.4,945.3 L1804.9,947.0 L1806.4,948.6 L1807.9,950.2 L1809.4,951.7 L1810.9,953.1 L1812.4,954.4 L1813.9,955.7 L1815.4,956.9 L1816.9,958.0 L1818.4,959.1 L1819.9,960.2 L1821.4,961.2 L1822.9,962.1 L1824.4,963.0 L1825.9,963.9 L1827.4,964.7 L1828.9,965.4 L1830.4,966.2 L1831.9,966.9 L1833.4,967.5 L1834.9,968.2 L1836.4,968.8 L1837.9,969.3 L1839.4,969.9 L1840.9,970.4 L1842.4,970.9 L1843.9,971.4 L1845.4,971.8 L1846.9,972.2 L1848.4,972.6 L1849.9,973.0 L1851.4,973.4 L1852.9,973.7 L1854.4,974.1 L1855.9,974.4 L1857.4,974.7 L1858.9,975.0 L1860.4,975.2 L1861.9,975.5 M1865.0,792.5 L1866.5,790.1 L1868.0,787.7 L1869.5,785.5 L1871.0,783.4 L1872.5,781.4 L1874.0,779.5 L1875.5,777.7 L1877.0,776.0 L1878.5,774.4 L1880.0,772.8 L1881.5,771.3 L1883.0,769.9 L1884.5,768.6 L1886.0,767.3 L1887.5,766.1 L1889.0,765.0 L1890.5,763.9" fill="none" stroke="#0000ff" stroke-width="1" shape-rendering="crispEdges"/><path d=" M1359.4,953.5 L1360.9,956.2 L1362.4,958.5 L1363.9,960.7 L1365.4,962.6 L1366.9,964.4 L1368.4,966.0 L1369.9,967.4 L1371.4,968.7 L1372.9,969.9 L1374.4,970.9 L1375.9,971.8 L1377.4,972.7 L1378.9,973.5 L1380.4,974.2 L1381.9,974.8 L1383.4,975.3 L1384.9,975.8 L1386.4,976.3 L1387.9,976.7 L1389.4,977.1 L1390.9,977.4 L1392.4,977.7 L1393.9,978.0 L1395.4,978.2 L1396.9,978.5 L1398.4,978.7 L1399.9,978.8 L1401.4,979.0 L1402.9,979.2 L1404.4,979.3 L1405.9,979.4 L1407.4,979.5 L1408.9,979.6 L1410.4,979.7 L1411.9,979.8 L1413.4,979.8 L1414.9,979.9 L1416.4,980.0 L1417.9,980.0 L1419.4,980.1 L1420.9,980.1 L1422.4,980.1 L1423.9,980.2 L1425.4,980.2 L1426.9,980.2 L1428.4,980.3 M1431.6,796.5 L1433.1,791.2 L1434.6,786.4 L1436.1,782.1 L1437.6,778.2 L1439.1,774.7 L1440.6,771.5 L1442.1,768.7 L1443.6,766.1 L1445.1,763.8 L1446.6,761.7 L1448.1,759.8 L1449.6,758.1 L1451.1,756.6 L1452.6,755.2 L1454.1,753.9 L1455.6,752.8 L1457.1,751.8 L1458.6,750.9 L1460.1,750.1 L1461.6,749.3 L1463.1,748.7 L1464.6,748.0 L1466.1,747.5 L1467.6,747.0 L1469.1,746.6 L1470.6,746.2 L1472.1,745.8 L1473.6,745.5 L1475.1,745.2 L1476.6,744.9 L1478.1,744.7 L1479.6,744.5 L1481.1,744.3 L1482.6,744.1 L1484.1,743.9 L1485.6,743.8 L1487.1,743.7 L1488.6,743.6 L1490.1,743.5 L1491.6,743.4 L1493.1,743.3 L1494.6,743.2 L1496.1,743.1 L1497.6,743.1 L1499.1,743.0 L1500.6,743.0 M1503.9,926.5 L1505.4,931.8 L1506.9,936.6 L1508.4,940.9 L1509.9,944.8 L1511.4,948.3 L1512.9,951.5 L1514.4,954.3 L1515.9,956.9 L1517.4,959.2 L1518.9,961.3 L1520.4,963.2 L1521.9,964.9 L1523.4,966.4 L1524.9,967.8 L1526.4,969.1 L1527.9,970.2 L1529.4,971.2 L1530.9,972.1 L1532.4,972.9 L1533.9,973.7 L1535.4,974.3 L1536.9,975.0 L1538.4,975.5 L1539.9,976.0 L1541.4,976.4 L1542.9,976.8 L1544.4,977.2 L1545.9,977.5 L1547.4,977.8 L1548.9,978.1 L1550.4,978.3 L1551.9,978.5 L1553.4,978.7 L1554.9,978.9 L1556.4,979.1 L1557.9,979.2 L1559.4,979.3 L1560.9,979.4 L1562.4,979.5 L1563.9,979.6 L1565.4,979.7 L1566.9,979.8 L1568.4,979.9 L1569.9,979.9 L1571.4,980.0 L1572.9,980.0 M1576.1,796.5 L1577.6,791.2 L1579.1,786.4 L1580.6,782.1 L1582.1,778.2 L1583.6,774.7 L1585.1,771.5 L1586.6,768.7 L1588.1,766.1 L1589.6,763.8 L1591.1,761.7 L1592.6,759.8 L1594.1,758.1 L1595.6,756.6 L1597.1,755.2 L1598.6,753.9 L1600.1,752.8 L1601.6,751.8 L1603.1,750.9 L1604.6,750.1 L1606.1,749.3 L1607.6,748.7 L1609.1,748.0 L1610.6,747.5 L1612.1,747.0 L1613.6,746.6 L1615.1,746.2 L1616.6,745.8 L1618.1,745.5 L1619.6,745.2 L1621.1,744.9 L1622.6,744.7 L1624.1,744.5 L1625.6,744.3 L1627.1,744.1 L1628.6,743.9 L1630.1,743.8 L1631.6,743.7 L1633.1,743.6 L1634.6,743.5 L1636.1,743.4 L1637.6,743.3 L1639.1,743.2 L1640.6,743.1 L1642.1,743.1 L1643.6,743.0 L1645.1,743.0 M1648.4,926.5 L1649.9,931.8 L1651.4,936.6 L1652.9,940.9 L1654.4,944.8 L1655.9,948.3 L1657.4,951.5 L1658.9,954.3 L1660.4,956.9 L1661.9,959.2 L1663.4,961.3 L1664.9,963.2 L1666.4,964.9 L1667.9,966.4 L1669.4,967.8 L1670.9,969.1 L1672.4,970.2 L1673.9,971.2 L1675.4,972.1 L1676.9,972.9 L1678.4,973.7 L1679.9,974.3 L1681.4,975.0 L1682.9,975.5 L1684.4,976.0 L1685.9,976.4 L1687.4,976.8 L1688.9,977.2 L1690.4,977.5 L1691.9,977.8 L1693.4,978.1 L1694.9,978.3 L1696.4,978.5 L1697.9,978.7 L1699.4,978.9 L1700.9,979.1 L1702.4,979.2 L1703.9,979.3 L1705.4,979.4 L1706.9,979.5 L1708.4,979.6 L1709.9,979.7 L1711.4,979.8 L1712.9,979.9 L1714.4,979.9 L1715.9,980.0 L1717.4,980.0 M1720.6,796.5 L1722.1,791.2 L1723.6,786.4 L1725.1,782.1 L1726.6,778.2 L1728.1,774.7 L1729.6,771.5 L1731.1,768.7 L1732.6,766.1 L1734.1,763.8 L1735.6,761.7 L1737.1,759.8 L1738.6,758.1 L1740.1,756.6 L1741.6,755.2 L1743.1,753.9 L1744.6,752.8 L1746.1,751.8 L1747.6,750.9 L1749.1,750.1 L1750.6,749.3 L1752.1,748.7 L1753.6,748.0 L1755.1,747.5 L1756.6,747.0 L1758.1,746.6 L1759.6,746.2 L1761.1,745.8 L1762.6,745.5 L1764.1,745.2 L1765.6,744.9 L1767.1,744.7 L1768.6,744.5 L1770.1,744.3 L1771.6,744.1 L1773.1,743.9 L1774.6,743.8 L1776.1,743.7 L1777.6,743.6 L1779.1,743.5 L1780.6,743.4 L1782.1,743.3 L1783.6,743.2 L1785.1,743.1 L1786.6,743.1 L1788.1,743.0 L1789.6,743.0 M1792.9,926.5 L1794.4,931.8 L1795.9,936.6 L1797.4,940.9 L1798.9,944.8 L1800.4,948.3 L1801.9,951.5 L1803.4,954.3 L1804.9,956.9 L1806.4,959.2 L1807.9,961.3 L1809.4,963.2 L1810.9,964.9 L1812.4,966.4 L1813.9,967.8 L1815.4,969.1 L1816.9,970.2 L1818.4,971.2 L1819.9,972.1 L1821.4,972.9 L1822.9,973.7 L1824.4,974.3 L1825.9,975.0 L1827.4,975.5 L1828.9,976.0 L1830.4,976.4 L1831.9,976.8 L1833.4,977.2 L1834.9,977.5 L1836.4,977.8 L1837.9,978.1 L1839.4,978.3 L1840.9,978.5 L1842.4,978.7 L1843.9,978.9 L1845.4,979.1 L1846.9,979.2 L1848.4,979.3 L1849.9,979.4 L1851.4,979.5 L1852.9,979.6 L1854.4,979.7 L1855.9,979.8 L1857.4,979.9 L1858.9,979.9 L1860.4,980.0 L1861.9,980.0 M1865.0,796.5 L1866.5,791.2 L1868.0,786.4 L1869.5,782.1 L1871.0,778.2 L1872.5,774.7 L1874.0,771.5 L1875.5,768.7 L1877.0,766.1 L1878.5,763.8 L1880.0,761.7 L1881.5,759.8 L1883.0,758.1 L1884.5,756.6 L1886.0,755.2 L1887.5,753.9 L1889.0,752.8 L1890.5,751.8" fill="none" stroke="#ff0000" stroke-width="1" shape-rendering="crispEdges"/><path d=" M1359.4,957.5 L1360.9,961.9 L1362.4,965.5 L1363.9,968.4 L1365.4,970.7 L1366.9,972.6 L1368.4,974.1 L1369.9,975.4 L1371.4,976.4 L1372.9,977.2 L1374.4,977.8 L1375.9,978.3 L1377.4,978.7 L1378.9,979.1 L1380.4,979.4 L1381.9,979.6 L1383.4,979.8 L1384.9,979.9 L1386.4,980.0 L1387.9,980.1 L1389.4,980.2 L1390.9,980.2 L1392.4,980.3 L1393.9,980.3 L1395.4,980.4 L1396.9,980.4 L1398.4,980.4 L1399.9,980.4 L1401.4,980.4 L1402.9,980.5 L1404.4,980.5 L1405.9,980.5 L1407.4,980.5 L1408.9,980.5 L1410.4,980.5 L1411.9,980.5 L1413.4,980.5 L1414.9,980.5 L1416.4,980.5 L1417.9,980.5 L1419.4,980.5 L1420.9,980.5 L1422.4,980.5 L1423.9,980.5 L1425.4,980.5 L1426.9,980.5 L1428.4,980.5 M1431.6,792.5 L1433.1,782.9 L1434.6,775.1 L1436.1,768.8 L1437.6,763.7 L1439.1,759.6 L1440.6,756.3 L1442.1,753.7 L1443.6,751.5 L1445.1,749.8 L1446.6,748.4 L1448.1,747.2 L1449.6,746.3 L1451.1,745.6 L1452.6,745.0 L1454.1,744.5 L1455.6,744.1 L1457.1,743.8 L1458.6,743.6 L1460.1,743.4 L1461.6,743.2 L1463.1,743.1 L1464.6,742.9 L1466.1,742.9 L1467.6,742.8 L1469.1,742.7 L1470.6,742.7 L1472.1,742.7 L1473.6,742.6 L1475.1,742.6 L1476.6,742.6 L1478.1,742.6 L1479.6,742.6 L1481.1,742.5 L1482.6,742.5 L1484.1,742.5 L1485.6,742.5 L1487.1,742.5 L1488.6,742.5 L1490.1,742.5 L1491.6,742.5 L1493.1,742.5 L1494.6,742.5 L1496.1,742.5 L1497.6,742.5 L1499.1,742.5 L1500.6,742.5 M1503.9,930.5 L1505.4,940.1 L1506.9,947.9 L1508.4,954.2 L1509.9,959.3 L1511.4,963.4 L1512.9,966.7 L1514.4,969.3 L1515.9,971.5 L1517.4,973.2 L1518.9,974.6 L1520.4,975.8 L1521.9,976.7 L1523.4,977.4 L1524.9,978.0 L1526.4,978.5 L1527.9,978.9 L1529.4,979.2 L1530.9,979.4 L1532.4,979.6 L1533.9,979.8 L1535.4,979.9 L1536.9,980.1 L1538.4,980.1 L1539.9,980.2 L1541.4,980.3 L1542.9,980.3 L1544.4,980.3 L1545.9,980.4 L1547.4,980.4 L1548.9,980.4 L1550.4,980.4 L1551.9,980.4 L1553.4,980.5 L1554.9,980.5 L1556.4,980.5 L1557.9,980.5 L1559.4,980.5 L1560.9,980.5 L1562.4,980.5 L1563.9,980.5 L1565.4,980.5 L1566.9,980.5 L1568.4,980.5 L1569.9,980.5 L1571.4,980.5 L1572.9,980.5 M1576.1,792.5 L1577.6,782.9 L1579.1,775.1 L1580.6,768.8 L1582.1,763.7 L1583.6,759.6 L1585.1,756.3 L1586.6,753.7 L1588.1,751.5 L1589.6,749.8 L1591.1,748.4 L1592.6,747.2 L1594.1,746.3 L1595.6,745.6 L1597.1,745.0 L1598.6,744.5 L1600.1,744.1 L1601.6,743.8 L1603.1,743.6 L1604.6,743.4 L1606.1,743.2 L1607.6,743.1 L1609.1,742.9 L1610.6,742.9 L1612.1,742.8 L1613.6,742.7 L1615.1,742.7 L1616.6,742.7 L1618.1,742.6 L1619.6,742.6 L1621.1,742.6 L1622.6,742.6 L1624.1,742.6 L1625.6,742.5 L1627.1,742.5 L1628.6,742.5 L1630.1,742.5 L1631.6,742.5 L1633.1,742.5 L1634.6,742.5 L1636.1,742.5 L1637.6,742.5 L1639.1,742.5 L1640.6,742.5 L1642.1,742.5 L1643.6,742.5 L1645.1,742.5 M1648.4,930.5 L1649.9,940.1 L1651.4,947.9 L1652.9,954.2 L1654.4,959.3 L1655.9,963.4 L1657.4,966.7 L1658.9,969.3 L1660.4,971.5 L1661.9,973.2 L1663.4,974.6 L1664.9,975.8 L1666.4,976.7 L1667.9,977.4 L1669.4,978.0 L1670.9,978.5 L1672.4,978.9 L1673.9,979.2 L1675.4,979.4 L1676.9,979.6 L1678.4,979.8 L1679.9,979.9 L1681.4,980.1 L1682.9,980.1 L1684.4,980.2 L1685.9,980.3 L1687.4,980.3 L1688.9,980.3 L1690.4,980.4 L1691.9,980.4 L1693.4,980.4 L1694.9,980.4 L1696.4,980.4 L1697.9,980.5 L1699.4,980.5 L1700.9,980.5 L1702.4,980.5 L1703.9,980.5 L1705.4,980.5 L1706.9,980.5 L1708.4,980.5 L1709.9,980.5 L1711.4,980.5 L1712.9,980.5 L1714.4,980.5 L1715.9,980.5 L1717.4,980.5 M1720.6,792.5 L1722.1,782.9 L1723.6,775.1 L1725.1,768.8 L1726.6,763.7 L1728.1,759.6 L1729.6,756.3 L1731.1,753.7 L1732.6,751.5 L1734.1,749.8 L1735.6,748.4 L1737.1,747.2 L1738.6,746.3 L1740.1,745.6 L1741.6,745.0 L1743.1,744.5 L1744.6,744.1 L1746.1,743.8 L1747.6,743.6 L1749.1,743.4 L1750.6,743.2 L1752.1,743.1 L1753.6,742.9 L1755.1,742.9 L1756.6,742.8 L1758.1,742.7 L1759.6,742.7 L1761.1,742.7 L1762.6,742.6 L1764.1,742.6 L1765.6,742.6 L1767.1,742.6 L1768.6,742.6 L1770.1,742.5 L1771.6,742.5 L1773.1,742.5 L1774.6,742.5 L1776.1,742.5 L1777.6,742.5 L1779.1,742.5 L1780.6,742.5 L1782.1,742.5 L1783.6,742.5 L1785.1,742.5 L1786.6,742.5 L1788.1,742.5 L1789.6,742.5 M1792.9,930.5 L1794.4,940.1 L1795.9,947.9 L1797.4,954.2 L1798.9,959.3 L1800.4,963.4 L1801.9,966.7 L1803.4,969.3 L1804.9,971.5 L1806.4,973.2 L1807.9,974.6 L1809.4,975.8 L1810.9,976.7 L1812.4,977.4 L1813.9,978.0 L1815.4,978.5 L1816.9,978.9 L1818.4,979.2 L1819.9,979.4 L1821.4,979.6 L1822.9,979.8 L1824.4,979.9 L1825.9,980.1 L1827.4,980.1 L1828.9,980.2 L1830.4,980.3 L1831.9,980.3 L1833.4,980.3 L1834.9,980.4 L1836.4,980.4 L1837.9,980.4 L1839.4,980.4 L1840.9,980.4 L1842.4,980.5 L1843.9,980.5 L1845.4,980.5 L1846.9,980.5 L1848.4,980.5 L1849.9,980.5 L1851.4,980.5 L1852.9,980.5 L1854.4,980.5 L1855.9,980.5 L1857.4,980.5 L1858.9,980.5 L1860.4,980.5 L1861.9,980.5 M1865.0,792.5 L1866.5,782.9 L1868.0,775.1 L1869.5,768.8 L1871.0,763.7 L1872.5,759.6 L1874.0,756.3 L1875.5,753.7 L1877.0,751.5 L1878.5,749.8 L1880.0,748.4 L1881.5,747.2 L1883.0,746.3 L1884.5,745.6 L1886.0,745.0 L1887.5,744.5 L1889.0,744.1 L1890.5,743.8" fill="none" stroke="#00c8c8" stroke-width="1" shape-rendering="crispEdges"/><path d="M1024.5,742.5 L1068.4,742.5 L1070.4,980.5 L1140.6,980.5 L1142.6,742.5 L1212.9,742.5 L1214.9,980.5 L1285.1,980.5 L1287.1,742.5 L1357.4,742.5 L1359.4,980.5 L1429.6,980.5 L1431.6,742.5 L1501.9,742.5 L1503.9,980.5 L1574.1,980.5 L1576.1,742.5 L1646.4,742.5 L1648.4,980.5 L1718.6,980.5 L1720.6,742.5 L1790.9,742.5 L1792.9,980.5 L1863.0,980.5 L1865.0,742.5 L1891.5,742.5" fill="none" stroke="#ff00ff" stroke-width="1" shape-rendering="crispEdges"/><path d="M1068.5,783 V798" stroke="#00ff00" stroke-width="1" shape-rendering="crispEdges"/><path d="M1213.5,783 V798" stroke="#00ff00" stroke-width="1" shape-rendering="crispEdges"/><path d="M1141.5,811 V816" stroke="#00ff00" stroke-width="1" shape-rendering="crispEdges"/><path d="M1286.5,811 V816" stroke="#00ff00" stroke-width="1" shape-rendering="crispEdges"/><path d="M1357.5,788 V795" stroke="#00c8c8" stroke-width="1" shape-rendering="crispEdges"/><path d="M1359.5,922 V940" stroke="#00c8c8" stroke-width="1" shape-rendering="crispEdges"/><path d="M1430.5,810 V853" stroke="#00c8c8" stroke-width="1" shape-rendering="crispEdges"/><path d="M1502.5,839 V862" stroke="#00c8c8" stroke-width="1" shape-rendering="crispEdges"/><path d="M1574.5,883 V908" stroke="#00c8c8" stroke-width="1" shape-rendering="crispEdges"/><path d="M1646.5,782 V798" stroke="#00ff00" stroke-width="1" shape-rendering="crispEdges"/><path d="M1647.5,901 V945" stroke="#00c8c8" stroke-width="1" shape-rendering="crispEdges"/><path d="M1719.5,810 V853" stroke="#00c8c8" stroke-width="1" shape-rendering="crispEdges"/><path d="M1791.5,839 V862" stroke="#00c8c8" stroke-width="1" shape-rendering="crispEdges"/><path d="M1863.5,883 V908" stroke="#00c8c8" stroke-width="1" shape-rendering="crispEdges"/><g fill="none" stroke="#000" stroke-width="1"><circle cx="410.5" cy="274.5" r="14.4"/><path d="M406.5,266.5 H414.5 M410.5,262.5 V270.5 M406.5,284.0 H414.5"/><path d="M410.5,260 L410.5,234.5 L441.5,234.5 L441.5,264.5 L449.5,264.5"/><path d="M410.5,289 L410.5,301.5 L463.5,301.5"/><path d="M449.5,286.5 L441.5,286.5 L441.5,301.5"/><rect x="439.0" y="299.0" width="5" height="5" fill="#000" stroke="none"/><rect x="461.0" y="299.0" width="5" height="5" fill="#000" stroke="none"/><circle cx="462.8" cy="274.5" r="14.4"/><path d="M463.5,260 L463.5,234.5 L504.5,234.5"/><path d="M462.8,260.2 V266.5 M462.8,289 V283.5 L471,274.5"/><circle cx="462.8" cy="267.8" r="1.4"/><circle cx="472" cy="273" r="1.6"/><path d="M440.5,268.5 H445.5 M443,266 V271 M440.5,283.5 H445.5"/><path d="M463.5,301.5 L463.5,309.5"/><path d="M455.5,309.5 L471.5,309.5 L463.5,317.5 Z"/><rect x="504.5" y="229.5" width="30.0" height="10.0"/><path d="M534.5,234.5 L605.5,234.5"/><rect x="566.0" y="232.0" width="5" height="5" fill="#000" stroke="none"/><path d="M568.5,234.5 L568.5,253"/><path d="M568.5,253 L561.0,256.75 L576.0,264.25 L561.0,271.75 L576.0,279.25 L568.5,283"/><path d="M568.5,283 L568.5,301.5 L605.5,301.5"/><path d="M605.5,234.5 L605.5,249"/><path d="M605.5,249 A6.666666666666667,6.166666666666667 0 0 1 605.5,261.3333333333333 A6.666666666666667,6.166666666666667 0 0 1 605.5,273.6666666666667 A6.666666666666667,6.166666666666667 0 0 1 605.5,286.0"/><path d="M605.5,261.3333333333333 Q600.5,258.8333333333333 596.5,261.3333333333333 Q600.5,264.3333333333333 605.5,261.3333333333333"/><path d="M605.5,273.6666666666667 Q600.5,271.1666666666667 596.5,273.6666666666667 Q600.5,276.6666666666667 605.5,273.6666666666667"/><circle cx="601.5" cy="281" r="1.8"/><path d="M605.5,286 L605.5,309.5"/><rect x="603.0" y="299.0" width="5" height="5" fill="#000" stroke="none"/><path d="M597.5,309.5 L613.5,309.5 L605.5,317.5 Z"/><path d="M208.5,294.5 L224.5,294.5 L216.5,285 Z"/><path d="M216.5,294.5 L216.5,312.5"/><rect x="211.5" y="312.5" width="10.0" height="30.0"/><path d="M216.5,342.5 L216.5,427.5"/><path d="M208.5,427.5 H224.5 M208.5,430.5 H224.5"/><path d="M216.5,430.5 L216.5,466.5"/><path d="M216.5,361.5 L336.5,361.5 L336.5,410.5"/><rect x="331.5" y="410.5" width="10.0" height="30.0"/><path d="M336.5,440.5 L336.5,466.5 L186.5,466.5"/><rect x="214.0" y="359.0" width="5" height="5" fill="#000" stroke="none"/><rect x="214.0" y="382.0" width="5" height="5" fill="#000" stroke="none"/><rect x="214.0" y="464.0" width="5" height="5" fill="#000" stroke="none"/><rect x="281.0" y="464.0" width="5" height="5" fill="#000" stroke="none"/><path d="M138.5,384.5 L145.0,378.0 L186.5,378.0 L186.5,391.0 L145.0,391.0 Z"/><path d="M186.5,384.5 L227.5,384.5"/><rect x="227.5" y="379.5" width="30.0" height="10.0"/><path d="M257.5,384.5 L287,384.5"/><path d="M287.5,384.5 A6.583333333333333,6.083333333333333 0 0 1 287.5,396.6666666666667 A6.583333333333333,6.083333333333333 0 0 1 287.5,408.8333333333333 A6.583333333333333,6.083333333333333 0 0 1 287.5,421.0"/><path d="M287.5,396.6666666666667 Q282.5,394.1666666666667 278.5,396.6666666666667 Q282.5,399.6666666666667 287.5,396.6666666666667"/><path d="M287.5,408.8333333333333 Q282.5,406.3333333333333 278.5,408.8333333333333 Q282.5,411.8333333333333 287.5,408.8333333333333"/><circle cx="280" cy="415" r="1.8"/><path d="M287.5,421 L283.5,422.5 L283.5,466.5"/><path d="M148.5,459.5 L180.0,459.5 L186.5,466 L180.0,472.5 L148.5,472.5 Z"/><path d="M231.5,518.5 L470.5,518.5"/><rect x="281.0" y="516.0" width="5" height="5" fill="#000" stroke="none"/><rect x="319.0" y="516.0" width="5" height="5" fill="#000" stroke="none"/><rect x="394.0" y="516.0" width="5" height="5" fill="#000" stroke="none"/><rect x="439.0" y="516.0" width="5" height="5" fill="#000" stroke="none"/><rect x="333" y="516" width="29" height="6" fill="#fffbf0" stroke="none"/><path d="M332.5,518.5 L336.25,511.0 L343.75,526.0 L351.25,511.0 L358.75,526.0 L362.5,518.5"/><path d="M231.5,518.5 L231.5,574.5"/><rect x="226.5" y="574.5" width="10.0" height="30.0"/><path d="M231.5,604.5 L231.5,638.5 L321.5,638.5 L321.5,587.5"/><path d="M321.5,518.5 L321.5,584.5"/><path d="M313.5,584.5 H329.5 M313.5,587.5 H329.5"/><path d="M283.5,518.5 L283.5,532.5"/><path d="M283.5,532.5 A6.916666666666667,6.416666666666667 0 0 0 283.5,545.3333333333334 A6.916666666666667,6.416666666666667 0 0 0 283.5,558.1666666666666 A6.916666666666667,6.416666666666667 0 0 0 283.5,571.0"/><path d="M283.5,545.3333333333334 Q288.5,542.8333333333334 292.5,545.3333333333334 Q288.5,548.3333333333334 283.5,545.3333333333334"/><path d="M283.5,558.1666666666666 Q288.5,555.6666666666666 292.5,558.1666666666666 Q288.5,561.1666666666666 283.5,558.1666666666666"/><circle cx="287" cy="539" r="1.8"/><path d="M283.5,571 L283.5,597.5"/><rect x="278.5" y="597.5" width="10.0" height="30.0"/><path d="M283.5,627.5 L283.5,653.5"/><rect x="281.0" y="636.0" width="5" height="5" fill="#000" stroke="none"/><path d="M275.5,653.5 L291.5,653.5 L283.5,661.5 Z"/><path d="M396.5,518.5 L396.5,550.5"/><path d="M388.5,550.5 L404.5,550.5 L396.5,561.5 Z"/><path d="M388.5,561.5 H404.5"/><path d="M396.5,561 L396.5,593.5"/><path d="M388.5,593.5 L404.5,593.5 L396.5,601.5 Z"/><path d="M441.5,518.5 L441.5,466.5 L459.5,466.5"/><path d="M459.5,466.5 L463.25,459.0 L470.75,474.0 L478.25,459.0 L485.75,474.0 L489.5,466.5"/><path d="M489.5,466.5 L515.5,466.5 L515.5,526.5"/><path d="M470.5,511.5 L470.5,541.5 L500.5,526.5 Z"/><path d="M472.5,518.5 H477.5 M472.5,533.5 H477.5 M475.0,531.0 V536.0"/><path d="M485.5,519.0 V511.0 M485.5,534.0 V542.0"/><path d="M487.5,516.5 H492.5 M490.0,514.0 V519.0 M487.5,536.5 H492.5"/><path d="M441.5,533.5 L470.5,533.5"/><path d="M441.5,533.5 L441.5,544.5"/><path d="M441.5,544.5 L434.0,548.25 L449.0,555.75 L434.0,563.25 L449.0,570.75 L441.5,574.5"/><path d="M441.5,574.5 L441.5,593.5"/><path d="M433.5,593.5 L449.5,593.5 L441.5,601.5 Z"/><path d="M500.5,526.5 L579.5,526.5"/><rect x="513.0" y="524.0" width="5" height="5" fill="#000" stroke="none"/><path d="M579.5,526.5 L583.25,519.0 L590.75,534.0 L598.25,519.0 L605.75,534.0 L609.5,526.5"/><path d="M609.5,526.5 L702.5,526.5"/><rect x="670.0" y="509.0" width="5" height="5" fill="#000" stroke="none"/><path d="M672.5,511.5 L672.5,458.5 L691.5,458.5"/><path d="M691.5,458.5 L695.25,451.0 L702.75,466.0 L710.25,451.0 L717.75,466.0 L721.5,458.5"/><path d="M721.5,458.5 L762.5,458.5 L762.5,518.5"/><path d="M702.5,503.5 L702.5,533.5 L732.5,518.5 Z"/><path d="M704.5,510.5 H709.5 M704.5,525.5 H709.5 M707.0,523.0 V528.0"/><path d="M717.5,511.0 V503.0 M717.5,526.0 V534.0"/><path d="M719.5,508.5 H724.5 M722.0,506.0 V511.0 M719.5,528.5 H724.5"/><path d="M672.5,511.5 L702.5,511.5"/><path d="M672.5,511.5 L672.5,544.5"/><path d="M672.5,544.5 L665.0,548.25 L680.0,555.75 L665.0,563.25 L680.0,570.75 L672.5,574.5"/><path d="M672.5,574.5 L672.5,593.5"/><path d="M664.5,593.5 L680.5,593.5 L672.5,601.5 Z"/><path d="M732.5,518.5 L792.5,518.5"/><rect x="760.0" y="516.0" width="5" height="5" fill="#000" stroke="none"/><path d="M792.5,512.5 L815.0,512.5 L821.5,519 L815.0,525.5 L792.5,525.5 Z"/><path d="M889.5,399 L889.5,423.5"/><path d="M874.0,423.5 H905.0 M874.0,434.5 H905.0"/><rect x="882.5" y="427.5" width="15" height="3"/><rect x="882.5" y="438.5" width="15" height="4"/><path d="M889.5,442.5 L889.5,483.5"/><rect x="887.0" y="456.0" width="5" height="5" fill="#000" stroke="none"/><path d="M867.5,458.5 L889.5,458.5"/><path d="M867.5,450.5 L867.5,466.5 L859.5,458.5 Z"/><path d="M874.0,483.5 H905.0 M874.0,494.5 H905.0"/><rect x="882.5" y="487.5" width="15" height="3"/><rect x="882.5" y="498.5" width="15" height="4"/><path d="M889.5,502 L889.5,534"/><path d="M880,417 H885 M882.5,414.5 V419.5 M880,477.5 H885 M882.5,475 V480"/><path d="M145.5,774.5 L187.5,774.5 L194,781 L187.5,787.5 L145.5,787.5 Z"/><path d="M194,780.5 L253.5,780.5"/><path d="M253.5,773.5 L253.5,803.5 L283.5,788.5 Z"/><path d="M255.5,780.5 H260.5 M255.5,795.5 H260.5 M258.0,793.0 V798.0"/><path d="M268.5,781.0 V773.0 M268.5,796.0 V804.0"/><path d="M270.5,778.5 H275.5 M273.0,776.0 V781.0 M270.5,798.5 H275.5"/><path d="M216.5,795.5 L253.5,795.5"/><path d="M216.5,795.5 L216.5,806.5"/><circle cx="216.5" cy="821" r="14.4"/><path d="M212.5,813 H220.5 M216.5,809 V817 M212.5,830.5 H220.5"/><path d="M216.5,835.5 L216.5,870.5"/><path d="M208.5,870.5 L224.5,870.5 L216.5,878.5 Z"/><path d="M283.5,788.5 L313.5,788.5 L313.5,720.5 L418.5,720.5"/><rect x="394.0" y="718.0" width="5" height="5" fill="#000" stroke="none"/><path d="M418.5,705.5 V735.5"/><path d="M418.5,712.5 L441.5,699.5"/><path d="M418.5,729.0 L441.5,743"/><path d="M441.0,742.5 L428.9298030184916,739.2503315819016 L432.5694316467618,733.2709416926006 Z"/><path d="M441.5,699.5 L441.5,690.5 L478.5,690.5"/><path d="M478.5,675 V705"/><path d="M478.5,684 L500.5,669"/><path d="M478.5,699.5 L500.5,713"/><path d="M479.0,684 L486.9430492274453,674.3481624044755 L490.88640699993584,680.1317538041283 Z"/><path d="M500.5,669 L500.5,653"/><path d="M500.5,713 L500.5,758.5 L441.5,758.5"/><path d="M441.5,743 L441.5,841"/><rect x="439.0" y="756.0" width="5" height="5" fill="#000" stroke="none"/><rect x="439.0" y="786.0" width="5" height="5" fill="#000" stroke="none"/><rect x="439.0" y="823.0" width="5" height="5" fill="#000" stroke="none"/><path d="M396.5,720.5 L396.5,752.5"/><path d="M388.5,752.5 L404.5,752.5 L396.5,763.5 Z"/><path d="M388.5,763.5 H404.5"/><path d="M396.5,763 L396.5,812.5"/><path d="M388.5,812.5 L404.5,812.5 L396.5,823.5 Z"/><path d="M388.5,823.5 H404.5"/><path d="M396.5,823 L396.5,889"/><rect x="394.0" y="860.0" width="5" height="5" fill="#000" stroke="none"/><path d="M441.5,788.5 L467.5,788.5"/><rect x="467.5" y="783.5" width="30.0" height="10.0"/><path d="M497.5,788.5 L523,788.5"/><path d="M523,782.0 L554.5,782.0 L561,788.5 L554.5,795.0 L523,795.0 Z"/><path d="M396.5,862.5 L418.5,862.5"/><path d="M418.5,847 V877"/><path d="M418.5,856 L441.5,841"/><path d="M418.5,871.5 L441.5,885"/><path d="M419.0,856 L427.13938993014915,846.5131495445017 L430.9632643939776,852.3764237223721 Z"/><path d="M441.5,825.5 L500.5,825.5 L500.5,877.5"/><path d="M441.5,885 L441.5,900.5 L478.5,900.5"/><path d="M478.5,885.5 V915.5"/><path d="M478.5,892.5 L500.5,877.5"/><path d="M478.5,909.0 L500.5,922"/><path d="M500.0,921.5 L487.88832906898494,918.4084911032304 L491.44943425387146,912.3820054057302 Z"/><path d="M500.5,922 L500.5,930.5 L396.5,930.5 L396.5,917.5"/><circle cx="396.5" cy="903.5" r="14.4"/><path d="M396.5,895.5 V907.5"/><path d="M393.5,905.5 L399.5,905.5 L396.5,912.0 Z"/><rect x="439.0" y="928.0" width="5" height="5" fill="#000" stroke="none"/><path d="M441.5,930.5 L441.5,953"/></g><g><text x="33" y="194" font-size="11" font-weight="bold" fill="#000" textLength="132" lengthAdjust="spacingAndGlyphs">.tran 0 1m 20u 100n uic</text><text x="310" y="175" font-size="11" font-weight="bold" fill="#000" textLength="300" lengthAdjust="spacingAndGlyphs">.model MYSW SW(Ron=0.001 Roff=1000Meg, Vt=2.5)</text><text x="303" y="217" font-size="11" font-weight="bold" fill="#000" textLength="182" lengthAdjust="spacingAndGlyphs">PULSE(0 5 500u 60n 60n 4m 8m)</text><text x="699" y="209" font-size="11" font-weight="bold" fill="#000" textLength="99" lengthAdjust="spacingAndGlyphs">.param L1 = 300u</text><text x="699" y="227.5" font-size="11" font-weight="bold" fill="#000" textLength="83" lengthAdjust="spacingAndGlyphs">.param Lt = 1u</text><text x="699" y="245.5" font-size="11" font-weight="bold" fill="#000" textLength="125" lengthAdjust="spacingAndGlyphs">.param R = 10000Meg</text><text x="699" y="264.5" font-size="11" font-weight="bold" fill="#000" textLength="93" lengthAdjust="spacingAndGlyphs">.param C = 100p</text><text x="676" y="299" font-size="11" font-weight="bold" fill="#000" textLength="230.5" lengthAdjust="spacingAndGlyphs">.step param R list  2 1 0.5 0.25 10000Meg</text><text x="377.2" y="380.7" font-size="11" font-weight="bold" fill="#000" textLength="73.4" lengthAdjust="spacingAndGlyphs">K2 L3 L4 {m}</text><text x="377.2" y="393.75" font-size="11" font-weight="bold" fill="#000" textLength="73.4" lengthAdjust="spacingAndGlyphs">K3 L1 L4 {m}</text><text x="377.2" y="406.8" font-size="11" font-weight="bold" fill="#000" textLength="72.2" lengthAdjust="spacingAndGlyphs">K4 L3 L1 0.01</text><text x="373" y="429.7" font-size="11" font-weight="bold" fill="#000" textLength="92.7" lengthAdjust="spacingAndGlyphs">.param m = 0.05</text><text x="114.3" y="894" font-size="11" font-weight="bold" fill="#000" textLength="215.5" lengthAdjust="spacingAndGlyphs">PULSE(-0.2 0.2 0 50u 50u 1n 100.001u)</text><text x="564" y="220" font-size="11" font-weight="bold" fill="#0000c0" textLength="44" lengthAdjust="spacingAndGlyphs">TARGET</text><text x="508" y="226.5" font-size="11" font-weight="bold" fill="#000" textLength="22" lengthAdjust="spacingAndGlyphs">R19</text><text x="508" y="249.5" font-size="11" font-weight="bold" fill="#000" textLength="22" lengthAdjust="spacingAndGlyphs">{R}</text><text x="385" y="260.5" font-size="11" font-weight="bold" fill="#000" textLength="13" lengthAdjust="spacingAndGlyphs">V1</text><text x="474.5" y="260.5" font-size="11" font-weight="bold" fill="#000" textLength="34" lengthAdjust="spacingAndGlyphs">MYSW</text><text x="474" y="298.5" font-size="11" font-weight="bold" fill="#000" textLength="13" lengthAdjust="spacingAndGlyphs">S1</text><text x="536" y="264.75" font-size="11" font-weight="bold" fill="#000" textLength="21.5" lengthAdjust="spacingAndGlyphs">R17</text><text x="513.4" y="282" font-size="11" font-weight="bold" fill="#000" textLength="44" lengthAdjust="spacingAndGlyphs">100Meg</text><text x="623" y="262" font-size="11" font-weight="bold" fill="#000" textLength="12.5" lengthAdjust="spacingAndGlyphs">L4</text><text x="623" y="284" font-size="11" font-weight="bold" fill="#000" textLength="21" lengthAdjust="spacingAndGlyphs">10µ</text><text x="195" y="323" font-size="11" font-weight="bold" fill="#000" textLength="14" lengthAdjust="spacingAndGlyphs">R1</text><text x="202.5" y="339.6" font-size="11" font-weight="bold" fill="#000" textLength="6" lengthAdjust="spacingAndGlyphs">1</text><text x="272.6" y="344.8" font-size="14" font-weight="bold" fill="#0000c0" textLength="16.7" lengthAdjust="spacingAndGlyphs">Tx</text><text x="231.5" y="375.7" font-size="11" font-weight="bold" fill="#000" textLength="21" lengthAdjust="spacingAndGlyphs">R18</text><text x="238" y="399.4" font-size="11" font-weight="bold" fill="#000" textLength="6.8" lengthAdjust="spacingAndGlyphs">1</text><text x="302" y="395.7" font-size="11" font-weight="bold" fill="#000" textLength="12.8" lengthAdjust="spacingAndGlyphs">L3</text><text x="307.4" y="419.8" font-size="11" font-weight="bold" fill="#000" textLength="21" lengthAdjust="spacingAndGlyphs">R15</text><text x="301.8" y="437" font-size="11" font-weight="bold" fill="#000" textLength="26.7" lengthAdjust="spacingAndGlyphs">1200</text><text x="220" y="421.7" font-size="11" font-weight="bold" fill="#000" textLength="14" lengthAdjust="spacingAndGlyphs">C2</text><text x="222" y="446" font-size="11" font-weight="bold" fill="#000" textLength="20.4" lengthAdjust="spacingAndGlyphs">{C}</text><text x="251.3" y="440" font-size="11" font-weight="bold" fill="#000" textLength="26.5" lengthAdjust="spacingAndGlyphs">{L1}</text><text x="146.3" y="388.3" font-size="11" font-weight="bold" fill="#000" textLength="38.3" lengthAdjust="spacingAndGlyphs">feedbk</text><text x="151.3" y="470.7" font-size="11" font-weight="bold" fill="#000" textLength="28.7" lengthAdjust="spacingAndGlyphs">drive</text><text x="268.7" y="505.9" font-size="14" font-weight="bold" fill="#0000c0" textLength="17.6" lengthAdjust="spacingAndGlyphs">Rx</text><text x="339.6" y="509" font-size="11" font-weight="bold" fill="#000" textLength="14" lengthAdjust="spacingAndGlyphs">R8</text><text x="336.6" y="536.7" font-size="11" font-weight="bold" fill="#000" textLength="20.6" lengthAdjust="spacingAndGlyphs">10K</text><text x="377.4" y="546" font-size="11" font-weight="bold" fill="#000" textLength="14.1" lengthAdjust="spacingAndGlyphs">D3</text><text x="357.7" y="575.9" font-size="11" font-weight="bold" fill="#000" textLength="33.8" lengthAdjust="spacingAndGlyphs">1N914</text><text x="261.3" y="545.5" font-size="11" font-weight="bold" fill="#000" textLength="11.4" lengthAdjust="spacingAndGlyphs">L1</text><text x="240.5" y="561.8" font-size="11" font-weight="bold" fill="#000" textLength="26.9" lengthAdjust="spacingAndGlyphs">300µ</text><text x="202.3" y="584.7" font-size="11" font-weight="bold" fill="#000" textLength="21.1" lengthAdjust="spacingAndGlyphs">R11</text><text x="203.2" y="601.4" font-size="11" font-weight="bold" fill="#000" textLength="20.2" lengthAdjust="spacingAndGlyphs">800</text><text x="254.6" y="606.7" font-size="11" font-weight="bold" fill="#000" textLength="21.1" lengthAdjust="spacingAndGlyphs">R10</text><text x="269.7" y="623.4" font-size="11" font-weight="bold" fill="#000" textLength="6" lengthAdjust="spacingAndGlyphs">1</text><text x="325" y="578.5" font-size="11" font-weight="bold" fill="#000" textLength="14" lengthAdjust="spacingAndGlyphs">C3</text><text x="326" y="603.2" font-size="11" font-weight="bold" fill="#000" textLength="20.6" lengthAdjust="spacingAndGlyphs">{C}</text><text transform="translate(488.5,510.8) rotate(-90)" font-size="11" font-weight="bold" fill="#000" textLength="18.3" lengthAdjust="spacingAndGlyphs">Vcc</text><text transform="translate(488.5,564.2) rotate(-90)" font-size="11" font-weight="bold" fill="#000" textLength="22.5" lengthAdjust="spacingAndGlyphs">-Vcc</text><text x="493.3" y="515.8" font-size="11" font-weight="bold" fill="#000" textLength="14.7" lengthAdjust="spacingAndGlyphs">U2</text><text x="477.2" y="573.7" font-size="11" font-weight="bold" fill="#000" textLength="49" lengthAdjust="spacingAndGlyphs">LT1022A</text><text x="463.3" y="455.8" font-size="11" font-weight="bold" fill="#000" textLength="21.7" lengthAdjust="spacingAndGlyphs">R14</text><text x="463" y="483.7" font-size="11" font-weight="bold" fill="#000" textLength="21.2" lengthAdjust="spacingAndGlyphs">80K</text><text x="450.5" y="554.7" font-size="11" font-weight="bold" fill="#000" textLength="14.5" lengthAdjust="spacingAndGlyphs">R6</text><text x="450.5" y="571.7" font-size="11" font-weight="bold" fill="#000" textLength="14.2" lengthAdjust="spacingAndGlyphs">6K</text><text x="586.7" y="515.8" font-size="11" font-weight="bold" fill="#000" textLength="14.1" lengthAdjust="spacingAndGlyphs">R9</text><text x="583.3" y="543.7" font-size="11" font-weight="bold" fill="#000" textLength="20.5" lengthAdjust="spacingAndGlyphs">330</text><text x="794" y="522.5" font-size="11" font-weight="bold" fill="#000" textLength="19.3" lengthAdjust="spacingAndGlyphs">out</text><text transform="translate(720.5,502.8) rotate(-90)" font-size="11" font-weight="bold" fill="#000" textLength="17.8" lengthAdjust="spacingAndGlyphs">Vcc</text><text transform="translate(720.5,556.7) rotate(-90)" font-size="11" font-weight="bold" fill="#000" textLength="23.4" lengthAdjust="spacingAndGlyphs">-Vcc</text><text x="725.3" y="507.5" font-size="11" font-weight="bold" fill="#000" textLength="14.4" lengthAdjust="spacingAndGlyphs">U5</text><text x="694.2" y="572.8" font-size="11" font-weight="bold" fill="#000" textLength="48.8" lengthAdjust="spacingAndGlyphs">LT1022A</text><text x="698.3" y="448.7" font-size="11" font-weight="bold" fill="#000" textLength="14.5" lengthAdjust="spacingAndGlyphs">R2</text><text x="695.3" y="476.3" font-size="11" font-weight="bold" fill="#000" textLength="20.5" lengthAdjust="spacingAndGlyphs">3K3</text><text x="648.7" y="554.7" font-size="11" font-weight="bold" fill="#000" textLength="14.1" lengthAdjust="spacingAndGlyphs">R3</text><text x="642.5" y="571.7" font-size="11" font-weight="bold" fill="#000" textLength="20.3" lengthAdjust="spacingAndGlyphs">400</text><text transform="translate(892.5,398.7) rotate(-90)" font-size="11" font-weight="bold" fill="#000" textLength="17.6" lengthAdjust="spacingAndGlyphs">Vcc</text><text transform="translate(892.5,557) rotate(-90)" font-size="11" font-weight="bold" fill="#000" textLength="23.1" lengthAdjust="spacingAndGlyphs">-Vcc</text><text x="901" y="417.8" font-size="11" font-weight="bold" fill="#000" textLength="14" lengthAdjust="spacingAndGlyphs">V3</text><text x="901" y="459.8" font-size="11" font-weight="bold" fill="#000" textLength="14" lengthAdjust="spacingAndGlyphs">5V</text><text x="901" y="477.8" font-size="11" font-weight="bold" fill="#000" textLength="14" lengthAdjust="spacingAndGlyphs">V4</text><text x="901" y="519" font-size="11" font-weight="bold" fill="#000" textLength="14" lengthAdjust="spacingAndGlyphs">5V</text><text x="148.5" y="784.6" font-size="11" font-weight="bold" fill="#000" textLength="38.7" lengthAdjust="spacingAndGlyphs">feedbk</text><text transform="translate(271,772.3) rotate(-90)" font-size="11" font-weight="bold" fill="#000" textLength="17.3" lengthAdjust="spacingAndGlyphs">Vcc</text><text transform="translate(271,827.3) rotate(-90)" font-size="11" font-weight="bold" fill="#000" textLength="23.3" lengthAdjust="spacingAndGlyphs">-Vcc</text><text x="276.2" y="777.8" font-size="11" font-weight="bold" fill="#000" textLength="14.3" lengthAdjust="spacingAndGlyphs">U4</text><text x="276.2" y="807.6" font-size="11" font-weight="bold" fill="#000" textLength="40.2" lengthAdjust="spacingAndGlyphs">LT1260</text><text x="183.5" y="825.3" font-size="11" font-weight="bold" fill="#000" textLength="22.5" lengthAdjust="spacingAndGlyphs">vsig</text><text transform="translate(503.5,653) rotate(-90)" font-size="11" font-weight="bold" fill="#000" textLength="18.2" lengthAdjust="spacingAndGlyphs">Vcc</text><text x="524" y="792.6" font-size="11" font-weight="bold" fill="#000" textLength="28.8" lengthAdjust="spacingAndGlyphs">drive</text><text x="510.2" y="685.7" font-size="11" font-weight="bold" fill="#000" textLength="42" lengthAdjust="spacingAndGlyphs">BC557C</text><text x="510.2" y="702.4" font-size="11" font-weight="bold" fill="#000" textLength="14.8" lengthAdjust="spacingAndGlyphs">Q4</text><text x="437" y="717.8" font-size="11" font-weight="bold" fill="#000" textLength="15.2" lengthAdjust="spacingAndGlyphs">Q2</text><text x="437" y="734.8" font-size="11" font-weight="bold" fill="#000" textLength="42" lengthAdjust="spacingAndGlyphs">BC547C</text><text x="377.4" y="747.8" font-size="11" font-weight="bold" fill="#000" textLength="14.3" lengthAdjust="spacingAndGlyphs">D1</text><text x="357.8" y="777.4" font-size="11" font-weight="bold" fill="#000" textLength="33.9" lengthAdjust="spacingAndGlyphs">1N914</text><text x="377.4" y="808" font-size="11" font-weight="bold" fill="#000" textLength="14.3" lengthAdjust="spacingAndGlyphs">D2</text><text x="474.6" y="779.6" font-size="11" font-weight="bold" fill="#000" textLength="14.3" lengthAdjust="spacingAndGlyphs">R7</text><text x="473.7" y="803.3" font-size="11" font-weight="bold" fill="#000" textLength="16.7" lengthAdjust="spacingAndGlyphs">1m</text><text transform="translate(444.5,976) rotate(-90)" font-size="11" font-weight="bold" fill="#000" textLength="23" lengthAdjust="spacingAndGlyphs">-Vcc</text><text x="450.4" y="857.7" font-size="11" font-weight="bold" fill="#000" textLength="41.2" lengthAdjust="spacingAndGlyphs">BC557C</text><text x="450.4" y="874.7" font-size="11" font-weight="bold" fill="#000" textLength="14.1" lengthAdjust="spacingAndGlyphs">Q1</text><text x="497" y="896.7" font-size="11" font-weight="bold" fill="#000" textLength="14.5" lengthAdjust="spacingAndGlyphs">Q3</text><text x="497" y="913.4" font-size="11" font-weight="bold" fill="#000" textLength="41.7" lengthAdjust="spacingAndGlyphs">BC547C</text><text x="360.2" y="899.4" font-size="11" font-weight="bold" fill="#000" textLength="11.1" lengthAdjust="spacingAndGlyphs">I1</text><text x="349.1" y="919.6" font-size="11" font-weight="bold" fill="#000" textLength="27.9" lengthAdjust="spacingAndGlyphs">400µ</text><text x="357.6" y="836.9" font-size="11" font-weight="bold" fill="#000" textLength="34.3" lengthAdjust="spacingAndGlyphs">1N914</text></g></svg></body></html>
